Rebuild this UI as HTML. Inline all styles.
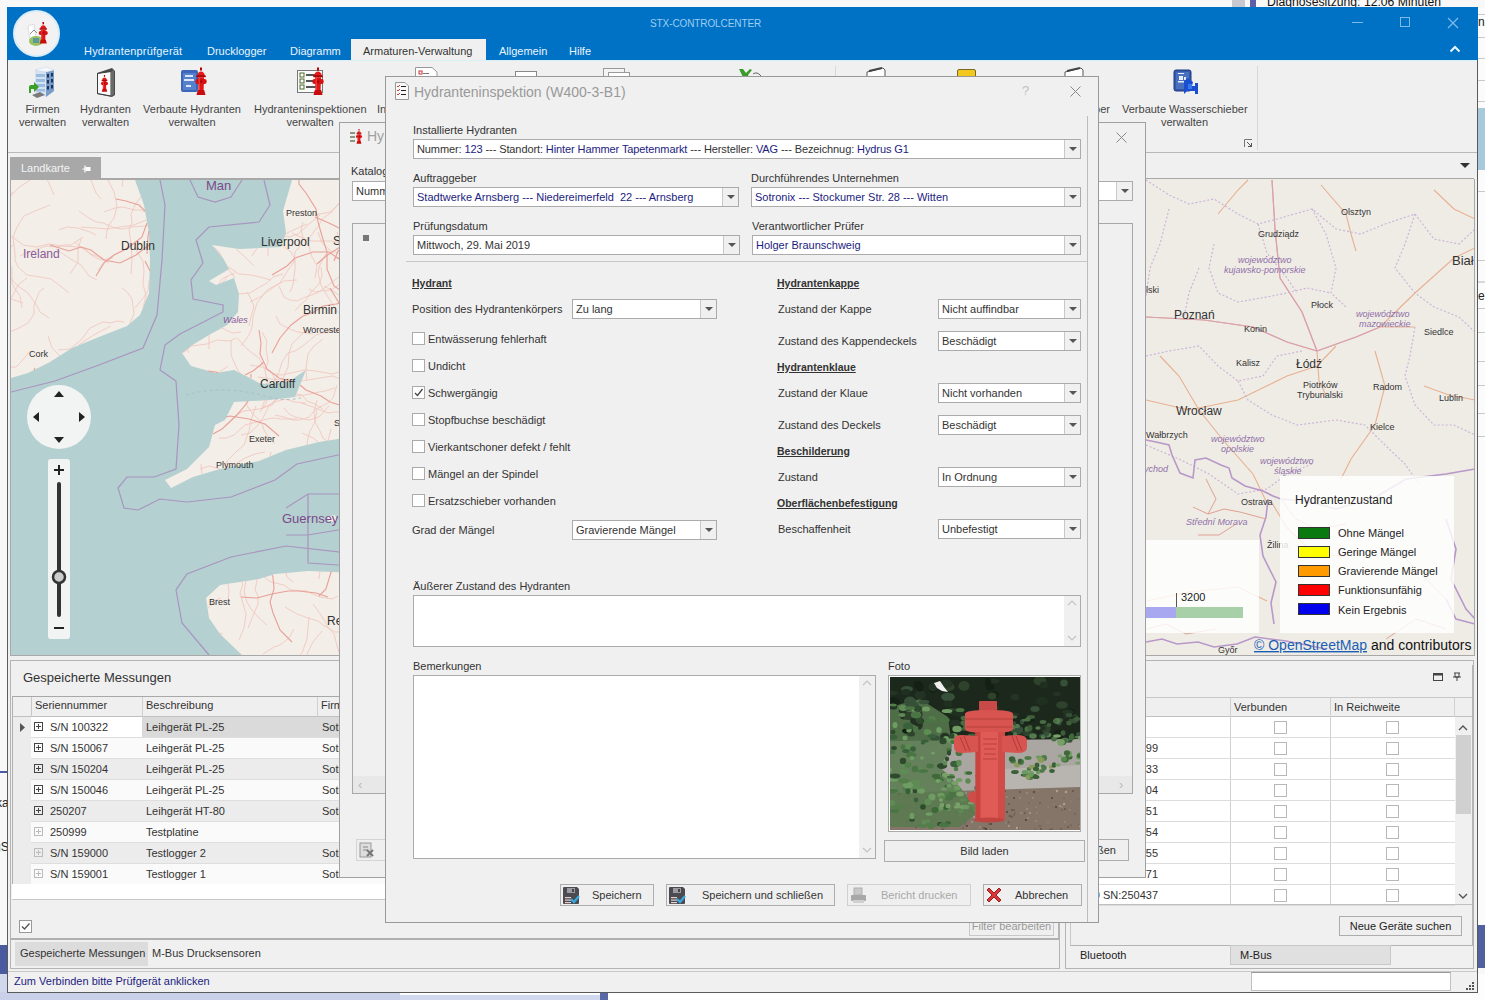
<!DOCTYPE html>
<html><head><meta charset="utf-8">
<style>
*{box-sizing:border-box;margin:0;padding:0}
html,body{width:1485px;height:1000px;overflow:hidden;background:#f7f7f7;font-family:"Liberation Sans",sans-serif;font-size:11px;color:#333}
.a{position:absolute}
.t{position:absolute;white-space:nowrap;line-height:13px}
.combo{position:absolute;background:#fff;border:1px solid #ababab;height:20px}
.combo .v{position:absolute;left:3px;top:3px;line-height:13px;white-space:nowrap;color:#1c1c80}
.combo .b{position:absolute;right:0;top:0;bottom:0;width:16px;border-left:1px solid #c8c8c8;background:#f0f0f0}
.combo .b:after{content:"";position:absolute;left:4px;top:7px;border-left:4px solid transparent;border-right:4px solid transparent;border-top:4px solid #555}
.cb{position:absolute;width:13px;height:13px;border:1px solid #aaa;background:#fff}
.u{font-weight:bold;text-decoration:underline;color:#333}
.btn{position:absolute;border:1px solid #adadad;background:#efefef;height:22px;text-align:center;line-height:20px}
</style></head><body>

<!-- desktop behind -->
<div class="a" style="left:0;top:0;width:1485px;height:8px;background:#f8f8f8"></div>
<div class="a" style="left:1232px;top:0;width:13px;height:8px;background:#c8c8d0"></div>
<div class="a" style="left:1250px;top:0;width:6px;height:8px;background:#5a5fa8"></div>
<div class="t" style="left:1267px;top:-4px;font-size:12.2px;color:#111">Diagnosesitzung: 12:06 Minuten</div>
<div class="a" style="left:0;top:771px;width:7px;height:2px;background:#4a5aa0"></div>
<div class="a" style="left:0;top:945px;width:7px;height:29px;background:#4a5aa0"></div>
<div class="a" style="left:0;top:974px;width:1485px;height:26px;background:#fdfdfd"></div>
<div class="a" style="left:0;top:974px;width:7px;height:26px;background:#d0d8ee"></div>
<div class="a" style="left:0;top:992px;width:400px;height:8px;background:#c8d0ea"></div>
<div class="a" style="left:400px;top:995px;width:200px;height:5px;background:#d0d8ee"></div>
<div class="a" style="left:600px;top:992px;width:8px;height:8px;background:#5a68a8"></div>


<!-- right strip behind -->
<div class="a" style="left:1477px;top:8px;width:8px;height:960px;background:#fbfbfb"></div>
<div class="t" style="left:1478px;top:16px;font-size:12px;color:#222">n</div>
<div class="a" style="left:1477px;top:14px;width:8px;height:1px;background:#c8c8c8"></div><div class="a" style="left:1477px;top:37px;width:8px;height:1px;background:#c8c8c8"></div><div class="a" style="left:1477px;top:58px;width:8px;height:1px;background:#c8c8c8"></div><div class="a" style="left:1477px;top:80px;width:8px;height:1px;background:#c8c8c8"></div><div class="a" style="left:1477px;top:101px;width:8px;height:1px;background:#c8c8c8"></div><div class="a" style="left:1477px;top:191px;width:8px;height:1px;background:#c8c8c8"></div><div class="a" style="left:1477px;top:260px;width:8px;height:1px;background:#c8c8c8"></div><div class="a" style="left:1477px;top:308px;width:8px;height:1px;background:#c8c8c8"></div><div class="a" style="left:1477px;top:332px;width:8px;height:1px;background:#c8c8c8"></div><div class="a" style="left:1477px;top:361px;width:8px;height:1px;background:#c8c8c8"></div><div class="a" style="left:1477px;top:385px;width:8px;height:1px;background:#c8c8c8"></div><div class="a" style="left:1477px;top:413px;width:8px;height:1px;background:#c8c8c8"></div><div class="a" style="left:1477px;top:436px;width:8px;height:1px;background:#c8c8c8"></div>
<div class="a" style="left:1477px;top:108px;width:8px;height:62px;background:#a8c8dc"></div>
<div class="a" style="left:1477px;top:281px;width:8px;height:2px;background:#d8d8d8"></div>
<div class="t" style="left:1478px;top:290px;font-size:12px;color:#222">e</div>
<div class="a" style="left:1477px;top:925px;width:8px;height:43px;background:#5060a0"></div>

<div class="t" style="left:-4px;top:797px;font-size:12px;color:#222">ka</div>
<div class="t" style="left:-6px;top:841px;font-size:12px;color:#222">gS</div>
<!-- main window -->
<div id="win" class="a" style="left:7px;top:7px;width:1471px;height:986px;background:#f0f0f0;border:1px solid #5a5a5a">
</div>

<!-- title bar -->
<div class="a" style="left:7px;top:7px;width:1471px;height:53px;background:#0072c6"></div>
<div class="a" style="left:13px;top:10px;width:47px;height:47px;border-radius:50%;background:#f2f2f2;border:2px solid #d8ecfa"></div>
<div class="t" style="left:650px;top:17px;font-size:10px;color:#9fcdf0;letter-spacing:-0.1px">STX-CONTROLCENTER</div>


<!-- tabs -->
<div class="t" style="left:84px;top:45px;color:#eaf4fc;letter-spacing:0.2px">Hydrantenprüfgerät</div>
<div class="t" style="left:207px;top:45px;color:#eaf4fc">Drucklogger</div>
<div class="t" style="left:290px;top:45px;color:#eaf4fc">Diagramm</div>
<div class="a" style="left:351px;top:39px;width:135px;height:22px;background:#f0f0f0"></div>
<div class="t" style="left:363px;top:45px;color:#333">Armaturen-Verwaltung</div>
<div class="t" style="left:499px;top:45px;color:#eaf4fc">Allgemein</div>
<div class="t" style="left:569px;top:45px;color:#eaf4fc">Hilfe</div>
<!-- window controls -->
<div class="a" style="left:1352px;top:22px;width:11px;height:1px;background:#7fbbe8"></div>
<div class="a" style="left:1400px;top:17px;width:10px;height:10px;border:1px solid #7fbbe8"></div>
<svg class="a" style="left:1447px;top:17px" width="12" height="12"><path d="M1 1L11 11M11 1L1 11" stroke="#7fbbe8" stroke-width="1.2"/></svg>
<svg class="a" style="left:1449px;top:45px" width="12" height="8"><path d="M1.5 6.5L6 2L10.5 6.5" stroke="#e8f6ff" stroke-width="2" fill="none"/></svg>

<!-- ribbon -->
<div class="a" style="left:8px;top:60px;width:1469px;height:1px;background:#d8f0f8"></div>
<div class="a" style="left:8px;top:152px;width:1469px;height:1px;background:#b8b8b8"></div>
<div class="a" style="left:835px;top:66px;width:1px;height:80px;background:#d8d8d8"></div>
<div class="a" style="left:1257px;top:66px;width:1px;height:84px;background:#d8d8d8"></div>
<div class="t" style="left:25px;top:103px;width:35px;text-align:center;color:#444">Firmen</div>
<div class="t" style="left:17px;top:116px;width:51px;text-align:center;color:#444">verwalten</div>
<div class="t" style="left:80px;top:103px;width:51px;text-align:center;color:#444">Hydranten</div>
<div class="t" style="left:80px;top:116px;width:51px;text-align:center;color:#444">verwalten</div>
<div class="t" style="left:142px;top:103px;width:100px;text-align:center;color:#444">Verbaute Hydranten</div>
<div class="t" style="left:142px;top:116px;width:100px;text-align:center;color:#444">verwalten</div>
<div class="t" style="left:254px;top:103px;width:112px;text-align:center;color:#444">Hydranteninspektionen</div>
<div class="t" style="left:254px;top:116px;width:112px;text-align:center;color:#444">verwalten</div>
<div class="t" style="left:377px;top:103px;color:#444">In</div>
<div class="t" style="left:1060px;top:103px;width:50px;text-align:right;color:#444">ber</div>
<div class="t" style="left:1122px;top:103px;width:125px;text-align:center;color:#444">Verbaute Wasserschieber</div>
<div class="t" style="left:1122px;top:116px;width:125px;text-align:center;color:#444">verwalten</div>
<svg class="a" style="left:1244px;top:139px" width="9" height="9"><path d="M0.5 8V0.5H8" stroke="#777" fill="none"/><path d="M3 3L7.5 7.5M4 7.5H7.5V4" stroke="#555" fill="none"/></svg>


<!-- ribbon icons -->
<svg width="0" height="0" style="position:absolute">
<defs>
<symbol id="hyd" viewBox="0 0 12 28">
<rect x="5" y="0" width="2" height="3" fill="#b00"/>
<path d="M2.2 8.5C2.2 2.5 9.8 2.5 9.8 8.5Z" fill="#e41a1a"/>
<rect x="1.2" y="7.8" width="9.6" height="2" rx="0.6" fill="#a80808"/>
<path d="M3 9.8H9L8.6 23H3.4Z" fill="#e01515"/>
<rect x="0.3" y="11.5" width="11.4" height="5" rx="2.2" fill="#d41010"/>
<path d="M1.5 27.5L2.8 22.5H9.2L10.5 27.5Z" fill="#c80c0c"/>
<path d="M4.2 10V22.5" stroke="#ff6a6a" stroke-width="1" opacity=".7"/>
<circle cx="6" cy="14" r="1" fill="#900"/>
</symbol>
</defs>
</svg>
<svg class="a" style="left:28px;top:66px" width="27" height="32" viewBox="0 0 27 32">
<path d="M7 4L18 1L26 4V25L18 31L7 27Z" fill="#d4e2f2"/>
<path d="M18 6L26 4V25L18 31Z" fill="#7a9cc8"/>
<path d="M7 4L18 1L26 4L18 6Z" fill="#f4f8fc" stroke="#c8d4e0" stroke-width=".5"/>
<g fill="#9cbce0"><rect x="8" y="8" width="9" height="3"/><rect x="8" y="13" width="9" height="3"/><rect x="8" y="18" width="9" height="3"/><rect x="8" y="23" width="9" height="2.5"/></g>
<g fill="#1e3458"><rect x="19" y="8" width="2" height="3.5"/><rect x="23" y="7" width="2" height="3.5"/><rect x="19" y="14" width="2" height="3.5"/><rect x="23" y="13" width="2" height="3.5"/><rect x="19" y="20" width="2" height="3.5"/><rect x="23" y="19" width="2" height="3.5"/></g>
<path d="M4 29L12 26L17 29L9 32Z" fill="#7a7a7a"/>
<path d="M1 21Q1 19 3 19H6V16L11 21L6 26V23H3V27H1Z" fill="#3aa028"/>
</svg>
<svg class="a" style="left:96px;top:67px" width="20" height="31" viewBox="0 0 20 31">
<path d="M1 6L16 1L19 4V28L16 30L1 27Z" fill="#4a4a4a"/>
<path d="M1.5 6.5L15 4.5V29L1.5 26.5Z" fill="#fbfbfb" stroke="#3a3a3a" stroke-width="1"/>
<path d="M15 4.5L18 2.5V27.5L15 29" fill="#6a6a6a"/>
<use href="#hyd" x="4.5" y="8" width="8" height="17"/>
</svg>
<svg class="a" style="left:180px;top:66px" width="29" height="31" viewBox="0 0 29 31">
<rect x="1" y="4" width="17" height="22" rx="2" fill="#3e66b8"/>
<rect x="3" y="7" width="13" height="17" fill="#5580cc"/>
<g fill="#dce6f8"><rect x="5" y="9" width="8" height="2"/><rect x="4" y="13" width="10" height="2"/><rect x="6" y="19" width="5" height="2"/></g>
<use href="#hyd" x="15" y="1" width="12" height="29"/>
</svg>
<svg class="a" style="left:296px;top:66px" width="30" height="31" viewBox="0 0 30 31">
<rect x="1.5" y="4.5" width="25" height="22" fill="#fafafa" stroke="#777"/>
<g fill="#fff" stroke="#4a6a2a"><rect x="4" y="7" width="4" height="4"/><rect x="4" y="13" width="4" height="4"/><rect x="4" y="19" width="4" height="4"/></g>
<g fill="#555"><rect x="10" y="8" width="10" height="2"/><rect x="10" y="14" width="10" height="2"/><rect x="10" y="20" width="10" height="2"/></g>
<use href="#hyd" x="16" y="1" width="12" height="29"/>
</svg>
<svg class="a" style="left:1173px;top:69px" width="26" height="27" viewBox="0 0 26 27">
<rect x="1" y="1" width="17" height="21" rx="2" fill="#3558a8" stroke="#1e3a80"/>
<rect x="3" y="3" width="13" height="17" fill="#4a70c0"/>
<g fill="#e8eefa"><rect x="5" y="4" width="6" height="1"/><rect x="6" y="7" width="4" height="4"/><rect x="11" y="8" width="2" height="3"/><rect x="5" y="12" width="8" height="1.5"/></g>
<path d="M11 12L15 9L20 13L19 17H22V14H25V25H22V22H14L11 25Z" fill="#1a50d0"/>
<rect x="15" y="15" width="4" height="5" fill="#3a78f0"/>
</svg>
<!-- partially hidden icons peeking above dialog -->
<svg class="a" style="left:415px;top:66px" width="24" height="10"><path d="M0.5 10V1.5H17L22 6V10" fill="#fff" stroke="#999"/><rect x="4" y="5" width="3" height="3" fill="none" stroke="#c33"/><rect x="8" y="7" width="6" height="1" fill="#777"/></svg>
<div class="a" style="left:515px;top:71px;width:22px;height:5px;background:#fff;border:1px solid #888;border-bottom:none"></div>
<div class="a" style="left:603px;top:68px;width:22px;height:8px;background:#f4f4f4;border:1px solid #999;border-bottom:none"></div>
<div class="a" style="left:608px;top:72px;width:22px;height:4px;background:#fff;border:1px solid #999;border-bottom:none"></div>
<svg class="a" style="left:739px;top:69px" width="24" height="8"><path d="M0 0L4 0L7 4L11 0L13 1L9 6L10 8H4Z" fill="#3a9a2a"/><path d="M14 5Q18 2 22 7" stroke="#666" fill="none"/></svg>
<svg class="a" style="left:866px;top:67px" width="20" height="9"><path d="M1 9V5L17 1L19 3V9" fill="#fff" stroke="#555"/><path d="M3 4L16 1" stroke="#444" stroke-width="2"/></svg>
<div class="a" style="left:957px;top:69px;width:19px;height:8px;background:#f0c820;border:1px solid #7a6a20;border-radius:2px 2px 0 0"></div>
<svg class="a" style="left:1064px;top:67px" width="20" height="9"><path d="M1 9V5L17 1L19 3V9" fill="#fff" stroke="#555"/><path d="M3 4L16 1" stroke="#444" stroke-width="2"/></svg>

<!-- app logo in circle -->
<svg class="a" style="left:22px;top:18px" width="32" height="32" viewBox="0 0 32 32">
<path d="M6 8L12 6L14 20L8 22Z" fill="#fff" stroke="#ccc" stroke-width=".6"/>
<path d="M8 16L12 12L15 15" stroke="#777" fill="none" stroke-width="0.8"/>
<ellipse cx="14" cy="23" rx="7" ry="5" fill="#9ac060"/>
<rect x="11" y="20" width="6" height="5" fill="#5a9a9a"/>
<use href="#hyd" x="16.5" y="4" width="9.5" height="22"/>
</svg>


<!-- Landkarte tab -->
<div class="a" style="left:10px;top:157px;width:91px;height:22px;background:#a8a8a8"></div>
<div class="t" style="left:21px;top:162px;color:#f4f4f4">Landkarte</div>
<svg class="a" style="left:82px;top:165px" width="10" height="8"><path d="M0.5 4H3M3 0.5V7.5" stroke="#fff" stroke-width="1.2" fill="none"/><rect x="3.5" y="2" width="5" height="4" fill="#fff"/></svg>
<svg class="a" style="left:1460px;top:163px" width="10" height="6"><path d="M0 0H10L5 5Z" fill="#333"/></svg>
<div class="a" style="left:10px;top:178px;width:1464px;height:2px;background:#a8a8a8"></div>

<!-- left map -->
<svg class="a" style="left:11px;top:180px" width="336" height="476" viewBox="0 0 336 476">
<rect width="336" height="476" fill="#b5d0d0"/>
<g fill="#f3eee7">
<polygon points="-11,0 124,0 133,25 138,53 139,80 138,113 129,135 116,146 88,157 61,168 39,182 17,193 0,198 -11,200"/>
<polygon points="281,0 374,0 374,259 327,259 308,262 275,270 248,281 209,289 182,297 160,308 154,300 176,289 198,267 204,245 214,240 223,222 259,220 284,217 295,190 277,202 250,204 237,197 223,190 205,193 180,186 171,173 183,164 198,155 216,145 227,132 228,114 223,98 205,105 198,101 218,89 212,78 201,65 228,69 270,67 275,53 272,31"/>
<polygon points="374,394 297,391 264,394 248,399 209,405 195,418 198,438 209,454 231,475 374,475"/>
<polygon points="316,337 324,335 326,341 318,342"/>
</g>
<g fill="none" stroke="#f0c4bc" stroke-width="0.8"><path d="M33 108 L28 112 L23 126 L23 134 L17 143 L8 148 L1 151 L0 151"/><path d="M120 94 L121 78 L120 64 L118 49 L121 43 L120 34 L124 25 L129 18 L130 17"/><path d="M93 32 L104 28 L112 27 L123 30 L130 30 L134 32"/><path d="M43 15 L37 1 L36 0"/><path d="M19 171 L10 182 L5 187 L0 187"/><path d="M85 55 L79 52 L67 48 L56 47 L48 50"/><path d="M37 156 L41 168 L49 176 L49 176"/><path d="M90 19 L85 13 L80 0"/><path d="M20 0 L19 0 L7 8 L0 16"/><path d="M12 123 L0 119"/><path d="M72 57 L60 65 L53 65 L47 67 L35 66 L21 71 L15 73 L9 76"/><path d="M70 47 L85 48 L95 49 L109 47 L123 45 L130 42 L136 40"/><path d="M59 94 L67 82 L67 76 L67 69 L70 59"/><path d="M68 31 L78 38 L85 42 L92 43 L104 48 L111 49 L121 47 L134 46 L137 45"/><path d="M98 83 L91 78 L80 74 L74 69 L68 67 L52 66 L38 64 L25 67 L12 65 L3 58 L0 56"/><path d="M113 142 L106 141 L100 143 L92 142 L79 148 L70 160 L59 169 L47 170"/><path d="M111 7 L112 0"/><path d="M58 113 L52 108 L40 99 L29 97 L16 95 L7 87 L4 80 L4 73 L2 57 L6 47 L13 36 L24 31 L39 25"/><path d="M124 61 L126 72 L132 81 L133 91 L132 104 L135 116 L132 128 L132 128"/><path d="M124 128 L133 117 L137 110 L138 102 L138 100"/><path d="M120 62 L115 69 L109 72 L98 78 L93 82 L87 90"/><path d="M11 128 L9 116 L4 109 L1 103 L1 88 L0 86"/><path d="M0 14 L2 12"/><path d="M16 98 L7 105 L1 117 L0 118"/><path d="M64 62 L70 67 L79 74 L85 78 L91 80 L102 78"/><path d="M38 138 L29 132 L26 126 L17 113 L7 106 L0 99"/><path d="M0 67 L3 64"/><path d="M111 108 L117 113 L121 119 L123 134 L119 143 L119 144"/><path d="M95 59 L96 51 L98 45 L103 38 L106 26 L103 12 L97 0"/><path d="M86 100 L78 96 L70 85 L58 78 L45 69"/><path d="M100 146 L86 153 L75 160 L69 164 L68 165"/><path d="M272 94 L262 97 L256 103 L247 108 L239 113 L228 114"/><path d="M265 136 L269 144 L281 150 L287 152 L302 154"/><path d="M315 74 L309 85 L307 92 L310 105 L317 117 L325 130 L332 136 L336 138"/><path d="M268 106 L273 117 L279 120 L286 121 L292 118 L306 113 L319 104 L330 95 L336 93"/><path d="M309 35 L298 44 L287 54 L278 57 L274 56"/><path d="M291 253 L302 258 L307 262 L307 262"/><path d="M216 96 L210 100 L208 104"/><path d="M198 155 L198 156 L198 169"/><path d="M304 35 L319 32 L327 25 L334 12 L336 10"/><path d="M217 186 L207 193"/><path d="M279 112 L282 105 L284 89 L284 79 L280 72 L271 65"/><path d="M334 189 L336 189"/><path d="M296 44 L289 47 L276 53 L274 55"/><path d="M298 109 L304 112 L310 111 L320 110 L329 104 L333 95 L335 82 L335 73 L330 64 L326 52"/><path d="M320 249 L317 261"/><path d="M249 232 L255 223 L256 220"/><path d="M262 203 L263 201 L268 192 L271 182 L277 173 L284 171 L293 165 L305 155 L319 151 L326 150 L336 149"/><path d="M243 86 L234 77 L226 70 L225 69"/><path d="M250 229 L264 222 L274 219 L284 222 L295 223"/><path d="M239 122 L251 116 L256 110 L269 103 L277 90 L283 82 L284 72 L290 65 L292 58 L290 49 L292 42"/><path d="M189 289 L198 286 L209 289 L209 289"/><path d="M307 52 L311 63 L320 71 L331 74 L336 74"/><path d="M260 100 L249 97 L240 95 L228 94 L216 86"/><path d="M210 76 L209 73 L203 67"/><path d="M245 226 L240 240 L238 251 L233 265 L225 272 L216 281 L214 288"/><path d="M254 272 L244 274 L234 278 L226 283 L214 288"/><path d="M251 227 L254 220"/><path d="M256 204 L256 201 L254 190 L257 182 L255 167 L256 161 L251 152"/><path d="M225 158 L219 161 L206 160 L196 164 L180 166 L176 170 L171 173"/><path d="M260 272 L259 277"/><path d="M220 160 L220 166 L220 175 L226 189 L230 194"/><path d="M235 221 L235 224 L241 233 L251 243 L253 250 L258 258 L264 264"/><path d="M257 76 L257 68"/><path d="M230 152 L221 153 L211 148 L210 148"/><path d="M306 230 L304 242 L299 251 L297 258 L296 265"/><path d="M306 220 L303 232 L304 242 L309 251 L312 258 L316 261"/><path d="M312 159 L302 167 L297 174 L296 181 L295 188 L296 201"/><path d="M326 205 L322 218 L317 223 L305 229 L298 237 L289 240 L282 240 L273 237 L264 235"/><path d="M312 229 L304 224 L296 221 L291 215 L285 214"/><path d="M265 219 L258 226 L252 238 L247 245 L239 253 L230 255"/><path d="M328 23 L321 32 L311 39 L308 45 L299 57 L297 63 L301 77 L306 86 L304 98"/><path d="M281 53 L294 59 L300 61 L306 61 L321 61 L333 64 L336 65"/><path d="M247 197 L260 199 L270 200 L277 199 L280 200"/><path d="M290 201 L303 199 L315 197 L322 196 L329 199 L336 200"/><path d="M241 76 L244 71 L247 68"/><path d="M290 223 L302 227 L317 233 L323 232 L336 232"/><path d="M239 185 L251 187 L263 194 L270 195 L280 193 L293 190 L295 190"/><path d="M295 190 L305 191 L321 194 L331 191"/><path d="M224 98 L218 90 L217 89"/><path d="M226 158 L236 169 L248 178 L253 187 L260 192 L265 201"/><path d="M323 78 L333 77 L336 79"/><path d="M208 258 L215 258 L223 255 L234 245 L249 241 L256 239 L262 238 L271 239 L286 239"/><path d="M190 284 L191 294"/><path d="M313 106 L325 113 L330 117 L335 127 L336 128"/><path d="M238 146 L240 137 L243 126 L240 119 L236 112"/><path d="M251 203 L251 204"/><path d="M284 216 L287 216 L299 214 L308 212 L314 211 L324 208"/><path d="M273 228 L278 234 L284 237 L298 240 L308 237 L318 226"/><path d="M286 100 L273 101 L266 105 L253 114 L246 123 L242 137 L241 148 L238 155 L230 166"/><path d="M310 87 L311 96 L308 104 L300 112 L295 120 L289 125 L284 131"/><path d="M224 93 L217 96 L211 103"/><path d="M178 173 L176 169"/><path d="M213 93 L213 92"/><path d="M304 147 L292 153 L281 164 L278 173 L277 187 L272 198 L272 202"/><path d="M266 219 L261 225 L248 229 L233 231 L225 235 L220 241"/><path d="M308 399 L309 391"/><path d="M217 422 L218 411 L217 404"/><path d="M302 424 L310 435 L317 447 L323 454 L326 466 L329 475"/><path d="M256 445 L249 439 L240 429 L236 422 L233 412 L235 401"/><path d="M212 454 L208 453"/><path d="M282 402 L276 397 L275 393"/><path d="M274 427 L286 434 L300 439 L307 441 L312 445 L324 452 L335 452 L336 452"/><path d="M252 474 L263 467 L269 465 L278 458 L283 449"/><path d="M210 418 L203 421 L199 426 L197 428"/><path d="M237 448 L242 436 L247 424 L247 416 L244 410 L246 401 L246 399"/><path d="M327 416 L321 419 L309 417 L295 411 L280 410 L273 405 L260 402 L253 397"/><path d="M228 460 L233 448 L235 434 L231 420 L229 413 L232 404 L231 402"/><path d="M311 451 L302 462 L296 474 L296 475"/><path d="M298 437 L297 448 L296 459 L291 473 L289 475"/></g>
<g fill="none" stroke="#e8a098" stroke-width="1.1"><path d="M136 74 L137 56 L138 51"/><path d="M85 96 L93 83 L103 75 L117 68 L131 57 L136 43"/><path d="M134 81 L139 91"/><path d="M39 65 L58 71 L70 67 L80 70 L93 80 L109 83 L125 75 L138 65"/><path d="M105 19 L115 21 L128 25 L134 31"/><path d="M24 188 L23 190"/><path d="M268 256 L254 244 L238 239 L219 236 L215 237"/><path d="M335 114 L323 106 L316 89 L316 72 L311 56 L307 42 L305 29 L295 13 L288 4 L288 0"/><path d="M306 84 L315 76 L329 67 L336 67"/><path d="M248 150 L250 163 L249 174 L256 189 L268 198 L279 201"/><path d="M289 205 L295 210 L310 216 L319 222 L332 226 L336 228"/><path d="M319 108 L328 123 L333 133 L336 135"/><path d="M261 173 L269 158 L280 145 L292 136 L303 132 L312 126 L325 124 L336 122"/><path d="M334 106 L336 102"/><path d="M261 95 L276 86 L284 78 L302 72 L318 72 L331 81 L336 87"/><path d="M253 182 L242 191 L234 195"/><path d="M207 193 L205 192 L197 191"/><path d="M304 37 L318 43 L334 51 L336 52"/><path d="M323 81 L327 71 L336 62"/><path d="M240 194 L240 198"/><path d="M237 221 L236 223 L225 236 L211 249 L202 254"/><path d="M317 417 L305 413 L288 411 L277 411 L261 414 L246 418 L230 417"/><path d="M308 416 L315 409 L320 392 L321 392"/><path d="M281 462 L269 450 L262 433 L259 422 L263 409 L262 397 L261 395"/></g>
<g fill="none" stroke="#a894c0" stroke-width="1.2">
<path d="M149 0 L154 25 L151 80 L146 135 L132 168 L88 185 L44 201 L0 212 L-11 215"/>
<path d="M179 0 L187 17 L204 22 L220 17 L231 0"/>
<path d="M253 0 L259 25 L248 42 L198 47 L185 60 L192 83 L180 100 L182 119 L212 125 L212 132 L169 154 L154 165 L149 190 L165 201 L168 245 L165 289 L143 297 L116 297 L107 308 L113 328 L127 330 L149 319 L176 322 L220 317 L264 300 L286 284 L327 275 L374 273"/>
<path d="M275 328 L297 314 L327 314 L374 314"/>
<path d="M275 355 L297 355 L327 350 L374 350"/>
<path d="M297 314 L297 383 L327 385 L374 385"/>
<path d="M374 377 L275 366 L220 377 L176 394 L165 410 L171 443 L198 475"/>
</g>
<path d="M175 215Q210 205 250 215Q270 222 290 218" stroke="#a8c0c8" stroke-dasharray="3,3" fill="none"/>
<g font-family="Liberation Sans" fill="#333">
<text x="195" y="10" font-size="13" fill="#7a4a8a">Man</text>
<text x="110" y="70" font-size="12">Dublin</text>
<text x="12" y="78" font-size="12" fill="#8a5a9a">Ireland</text>
<text x="18" y="177" font-size="9">Cork</text>
<text x="275" y="36" font-size="9">Preston</text>
<text x="250" y="66" font-size="12">Liverpool</text>
<text x="292" y="134" font-size="12">Birmin</text>
<text x="292" y="153" font-size="9">Worceste</text>
<text x="212" y="143" font-size="9" fill="#8a5a9a" font-style="italic">Wales</text>
<text x="249" y="208" font-size="12">Cardiff</text>
<text x="238" y="262" font-size="9">Exeter</text>
<text x="205" y="288" font-size="9">Plymouth</text>
<text x="271" y="343" font-size="13" fill="#7a4a8a">Guernsey</text>
<text x="198" y="425" font-size="9">Brest</text>
<text x="316" y="445" font-size="12">Re</text>
<text x="322" y="65" font-size="12">S</text>
<text x="323" y="246" font-size="9">S</text>
</g>
</svg>
<!-- map controls -->
<div class="a" style="left:27px;top:385px;width:64px;height:64px;border-radius:50%;background:#f2f4f4"></div>
<svg class="a" style="left:27px;top:385px" width="64" height="64"><g fill="#222"><path d="M32 6L37 12H27Z"/><path d="M32 58L37 52H27Z"/><path d="M6 32L12 27V37Z"/><path d="M58 32L52 27V37Z"/></g></svg>
<div class="a" style="left:48px;top:459px;width:22px;height:180px;border-radius:3px;background:#f2f4f4"></div>
<svg class="a" style="left:48px;top:459px" width="22" height="180"><g stroke="#222" stroke-width="2" fill="none"><path d="M6 11H16M11 6V16"/><path d="M6 169H16"/></g><line x1="11" y1="25" x2="11" y2="156" stroke="#333" stroke-width="4" stroke-linecap="round"/><circle cx="11" cy="118" r="6" fill="#ccc" stroke="#333" stroke-width="2.5"/></svg>




<!-- left bottom panel -->
<div class="a" style="left:10px;top:660px;width:1050px;height:309px;border:1px solid #b4b4b4;background:#f0f0f0"></div>
<div class="a" style="left:11px;top:661px;width:1048px;height:279px;border-bottom:2px solid #b0b0b0;border-right:1px solid #b4b4b4"></div>
<div class="t" style="left:23px;top:670px;font-size:13px;line-height:15px;color:#333">Gespeicherte Messungen</div>
<div class="a" style="left:12px;top:696px;width:1040px;height:188px;background:#fff;border-top:1px solid #a8a8a8;border-left:1px solid #b0b0b0"></div>
<div class="a" style="left:13px;top:697px;width:1040px;height:20px;background:#efefef;border-bottom:1px solid #c0c0c0"></div>
<div class="a" style="left:13px;top:717px;width:18px;height:168px;background:#ececec"></div>
<div class="a" style="left:31px;top:697px;width:1px;height:188px;background:#c8c8c8"></div>
<div class="a" style="left:142px;top:697px;width:1px;height:188px;background:#d0d0d0"></div>
<div class="a" style="left:317px;top:697px;width:1px;height:188px;background:#d0d0d0"></div>
<div class="t" style="left:35px;top:699px;color:#333">Seriennummer</div>
<div class="t" style="left:146px;top:699px;color:#333">Beschreibung</div>
<div class="t" style="left:321px;top:699px;color:#333">Firma</div>
<div class="a" style="left:31px;top:717px;width:111px;height:21px;background:#fff"></div><div class="a" style="left:142px;top:717px;width:250px;height:21px;background:#dadada"></div><svg class="a" style="left:20px;top:723px" width="6" height="9"><path d="M0 0L5 4.5L0 9Z" fill="#555"/></svg><div class="a" style="left:31px;top:737px;width:361px;height:1px;background:#dedede"></div><svg class="a" style="left:34px;top:722px" width="9" height="9"><rect x="0.5" y="0.5" width="8" height="8" fill="none" stroke="#444"/><path d="M2 4.5H7M4.5 2V7" stroke="#444"/></svg><div class="t" style="left:50px;top:721px;color:#333">S/N 100322</div><div class="t" style="left:146px;top:721px;color:#333">Leihgerät PL-25</div><div class="t" style="left:322px;top:721px;color:#333">Sotr</div>
<div class="a" style="left:31px;top:738px;width:361px;height:21px;background:#fafafa"></div><div class="a" style="left:31px;top:758px;width:361px;height:1px;background:#dedede"></div><svg class="a" style="left:34px;top:743px" width="9" height="9"><rect x="0.5" y="0.5" width="8" height="8" fill="none" stroke="#444"/><path d="M2 4.5H7M4.5 2V7" stroke="#444"/></svg><div class="t" style="left:50px;top:742px;color:#333">S/N 150067</div><div class="t" style="left:146px;top:742px;color:#333">Leihgerät PL-25</div><div class="t" style="left:322px;top:742px;color:#333">Sotr</div>
<div class="a" style="left:31px;top:759px;width:361px;height:21px;background:#ececec"></div><div class="a" style="left:31px;top:779px;width:361px;height:1px;background:#dedede"></div><svg class="a" style="left:34px;top:764px" width="9" height="9"><rect x="0.5" y="0.5" width="8" height="8" fill="none" stroke="#444"/><path d="M2 4.5H7M4.5 2V7" stroke="#444"/></svg><div class="t" style="left:50px;top:763px;color:#333">S/N 150204</div><div class="t" style="left:146px;top:763px;color:#333">Leihgerät PL-25</div><div class="t" style="left:322px;top:763px;color:#333">Sotr</div>
<div class="a" style="left:31px;top:780px;width:361px;height:21px;background:#fafafa"></div><div class="a" style="left:31px;top:800px;width:361px;height:1px;background:#dedede"></div><svg class="a" style="left:34px;top:785px" width="9" height="9"><rect x="0.5" y="0.5" width="8" height="8" fill="none" stroke="#444"/><path d="M2 4.5H7M4.5 2V7" stroke="#444"/></svg><div class="t" style="left:50px;top:784px;color:#333">S/N 150046</div><div class="t" style="left:146px;top:784px;color:#333">Leihgerät PL-25</div><div class="t" style="left:322px;top:784px;color:#333">Sotr</div>
<div class="a" style="left:31px;top:801px;width:361px;height:21px;background:#ececec"></div><div class="a" style="left:31px;top:821px;width:361px;height:1px;background:#dedede"></div><svg class="a" style="left:34px;top:806px" width="9" height="9"><rect x="0.5" y="0.5" width="8" height="8" fill="none" stroke="#444"/><path d="M2 4.5H7M4.5 2V7" stroke="#444"/></svg><div class="t" style="left:50px;top:805px;color:#333">250207</div><div class="t" style="left:146px;top:805px;color:#333">Leihgerät HT-80</div><div class="t" style="left:322px;top:805px;color:#333">Sotr</div>
<div class="a" style="left:31px;top:822px;width:361px;height:21px;background:#fafafa"></div><div class="a" style="left:31px;top:842px;width:361px;height:1px;background:#dedede"></div><svg class="a" style="left:34px;top:827px" width="9" height="9"><rect x="0.5" y="0.5" width="8" height="8" fill="none" stroke="#bbb"/><path d="M2 4.5H7M4.5 2V7" stroke="#bbb"/></svg><div class="t" style="left:50px;top:826px;color:#333">250999</div><div class="t" style="left:146px;top:826px;color:#333">Testplatine</div><div class="t" style="left:322px;top:826px;color:#333"></div>
<div class="a" style="left:31px;top:843px;width:361px;height:21px;background:#ececec"></div><div class="a" style="left:31px;top:863px;width:361px;height:1px;background:#dedede"></div><svg class="a" style="left:34px;top:848px" width="9" height="9"><rect x="0.5" y="0.5" width="8" height="8" fill="none" stroke="#bbb"/><path d="M2 4.5H7M4.5 2V7" stroke="#bbb"/></svg><div class="t" style="left:50px;top:847px;color:#333">S/N 159000</div><div class="t" style="left:146px;top:847px;color:#333">Testlogger 2</div><div class="t" style="left:322px;top:847px;color:#333">Sotr</div>
<div class="a" style="left:31px;top:864px;width:361px;height:21px;background:#fafafa"></div><div class="a" style="left:31px;top:884px;width:361px;height:1px;background:#dedede"></div><svg class="a" style="left:34px;top:869px" width="9" height="9"><rect x="0.5" y="0.5" width="8" height="8" fill="none" stroke="#bbb"/><path d="M2 4.5H7M4.5 2V7" stroke="#bbb"/></svg><div class="t" style="left:50px;top:868px;color:#333">S/N 159001</div><div class="t" style="left:146px;top:868px;color:#333">Testlogger 1</div><div class="t" style="left:322px;top:868px;color:#333">Sotr</div>

<div class="a" style="left:12px;top:884px;width:1040px;height:16px;background:#fff;border-bottom:1px solid #c8c8c8"></div>
<div class="a" style="left:19px;top:920px;width:13px;height:13px;border:1px solid #999;background:#fff"></div>
<svg class="a" style="left:20px;top:921px" width="11" height="11"><path d="M2 5.5L4.5 8L9.5 2.5" stroke="#555" stroke-width="1.3" fill="none"/></svg>
<div class="btn" style="left:969px;top:917px;width:85px;height:19px;line-height:17px;color:#999;border-color:#c8c8c8">Filter bearbeiten</div>
<div class="a" style="left:15px;top:942px;width:133px;height:24px;background:#dcdcdc"></div>
<div class="t" style="left:20px;top:947px;color:#333">Gespeicherte Messungen</div>
<div class="t" style="left:152px;top:947px;color:#333">M-Bus Drucksensoren</div>

<!-- status bar -->
<div class="a" style="left:8px;top:971px;width:1469px;height:1px;background:#c8c8c8"></div>
<div class="t" style="left:14px;top:975px;color:#1c1c80">Zum Verbinden bitte Prüfgerät anklicken</div>
<div class="a" style="left:1251px;top:972px;width:200px;height:19px;background:#fff;border:1px solid #c0c0c0;border-top-color:#999"></div>
<svg class="a" style="left:1466px;top:982px" width="9" height="9"><g fill="#555"><rect x="6" y="0" width="2" height="2"/><rect x="3" y="3" width="2" height="2"/><rect x="6" y="3" width="2" height="2"/><rect x="0" y="6" width="2" height="2"/><rect x="3" y="6" width="2" height="2"/><rect x="6" y="6" width="2" height="2"/></g></svg>

<!-- right bottom panel -->
<div class="a" style="left:1065px;top:660px;width:409px;height:309px;border:1px solid #b4b4b4;background:#f0f0f0"></div>
<div class="a" style="left:1070px;top:665px;width:403px;height:281px;border:1px solid #b4b4b4;border-top:none;border-left:1px solid #c8c8c8"></div>
<svg class="a" style="left:1433px;top:672px" width="30" height="10"><rect x="0.5" y="1.5" width="9" height="7" fill="none" stroke="#444"/><rect x="0.5" y="1.5" width="9" height="2" fill="#444"/><path d="M21 1H27M22 1V5H26V1M20 5H28M24 5V9" stroke="#444" fill="none"/></svg>
<div class="a" style="left:1070px;top:697px;width:402px;height:208px;background:#fff;border-top:1px solid #c8c8c8;border-bottom:1px solid #c0c0c0"></div>
<div class="a" style="left:1070px;top:698px;width:402px;height:19px;background:#efefef;border-bottom:1px solid #c0c0c0"></div>
<div class="a" style="left:1230px;top:698px;width:1px;height:206px;background:#d0d0d0"></div>
<div class="a" style="left:1330px;top:698px;width:1px;height:206px;background:#d0d0d0"></div>
<div class="a" style="left:1454px;top:698px;width:1px;height:19px;background:#d0d0d0"></div>
<div class="t" style="left:1234px;top:701px;color:#333">Verbunden</div>
<div class="t" style="left:1334px;top:701px;color:#333">In Reichweite</div>
<div class="a" style="left:1070px;top:737px;width:385px;height:1px;background:#dcdcdc"></div><div class="cb" style="left:1274px;top:721px;border-color:#b8b8b8"></div><div class="cb" style="left:1386px;top:721px;border-color:#b8b8b8"></div>
<div class="a" style="left:1070px;top:758px;width:385px;height:1px;background:#dcdcdc"></div><div class="t" style="left:1060px;top:742px;width:98px;text-align:right;color:#333">SN:250999</div><div class="cb" style="left:1274px;top:742px;border-color:#b8b8b8"></div><div class="cb" style="left:1386px;top:742px;border-color:#b8b8b8"></div>
<div class="a" style="left:1070px;top:779px;width:385px;height:1px;background:#dcdcdc"></div><div class="t" style="left:1060px;top:763px;width:98px;text-align:right;color:#333">SN:250133</div><div class="cb" style="left:1274px;top:763px;border-color:#b8b8b8"></div><div class="cb" style="left:1386px;top:763px;border-color:#b8b8b8"></div>
<div class="a" style="left:1070px;top:800px;width:385px;height:1px;background:#dcdcdc"></div><div class="t" style="left:1060px;top:784px;width:98px;text-align:right;color:#333">SN:250204</div><div class="cb" style="left:1274px;top:784px;border-color:#b8b8b8"></div><div class="cb" style="left:1386px;top:784px;border-color:#b8b8b8"></div>
<div class="a" style="left:1070px;top:821px;width:385px;height:1px;background:#dcdcdc"></div><div class="t" style="left:1060px;top:805px;width:98px;text-align:right;color:#333">SN:250451</div><div class="cb" style="left:1274px;top:805px;border-color:#b8b8b8"></div><div class="cb" style="left:1386px;top:805px;border-color:#b8b8b8"></div>
<div class="a" style="left:1070px;top:842px;width:385px;height:1px;background:#dcdcdc"></div><div class="t" style="left:1060px;top:826px;width:98px;text-align:right;color:#333">SN:250454</div><div class="cb" style="left:1274px;top:826px;border-color:#b8b8b8"></div><div class="cb" style="left:1386px;top:826px;border-color:#b8b8b8"></div>
<div class="a" style="left:1070px;top:863px;width:385px;height:1px;background:#dcdcdc"></div><div class="t" style="left:1060px;top:847px;width:98px;text-align:right;color:#333">SN:250455</div><div class="cb" style="left:1274px;top:847px;border-color:#b8b8b8"></div><div class="cb" style="left:1386px;top:847px;border-color:#b8b8b8"></div>
<div class="a" style="left:1070px;top:884px;width:385px;height:1px;background:#dcdcdc"></div><div class="t" style="left:1060px;top:868px;width:98px;text-align:right;color:#333">SN:250271</div><div class="cb" style="left:1274px;top:868px;border-color:#b8b8b8"></div><div class="cb" style="left:1386px;top:868px;border-color:#b8b8b8"></div>
<div class="a" style="left:1070px;top:905px;width:385px;height:1px;background:#dcdcdc"></div><div class="t" style="left:1060px;top:889px;width:98px;text-align:right;color:#333">0 SN:250437</div><div class="cb" style="left:1274px;top:889px;border-color:#b8b8b8"></div><div class="cb" style="left:1386px;top:889px;border-color:#b8b8b8"></div>

<div class="a" style="left:1455px;top:717px;width:17px;height:187px;background:#f0f0f0"></div>
<div class="a" style="left:1456px;top:735px;width:15px;height:79px;background:#d0d0d0"></div>
<svg class="a" style="left:1457px;top:722px" width="12" height="180"><path d="M2 8L6 4L10 8M2 172L6 176L10 172" stroke="#555" stroke-width="1.4" fill="none"/></svg>
<div class="btn" style="left:1339px;top:916px;width:123px;height:20px;line-height:18px;color:#222">Neue Geräte suchen</div>
<div class="a" style="left:1230px;top:945px;width:161px;height:20px;background:#e0e0e0;border:1px solid #c8c8c8"></div>
<div class="t" style="left:1080px;top:949px;color:#222">Bluetooth</div>
<div class="t" style="left:1240px;top:949px;color:#222">M-Bus</div>

<!-- right map -->
<svg class="a" style="left:1146px;top:179px" width="329" height="476" viewBox="0 0 329 476">
<rect width="329" height="476" fill="#efece6"/>
<g fill="none" stroke="#e8b090" stroke-width="1.1">
<path d="M126 1 L129 50 L134 99 L156 133 L171 172"/>
<path d="M-0 138 L58 141 L107 148 L141 163 L171 172 L210 158 L234 148 L269 148"/>
<path d="M234 148 L269 114 L308 79 L329 69"/>
<path d="M175 6 L200 35 L205 55 L210 72"/>
<path d="M229 172 L239 207 L229 246 L205 280 L195 300"/>
<path d="M278 207 L303 216 L329 221"/>
<path d="M14 177 L33 197 L53 231 L77 261 L107 295 L121 324"/>
<path d="M-0 221 L43 231 L92 221 L141 197 L171 187 L190 167"/>
<path d="M171 172 L173 202 L180 216"/>
<path d="M72 35 L92 11 L102 1"/>
<path d="M288 11 L308 30 L329 40"/>
<path d="M126 324 L141 349 L166 373 L200 378"/>
<path d="M-0 422 L43 413 L92 408 L121 422"/>
</g>
<g fill="none" stroke="#d8a0b0" stroke-width="1.2"><path d="M126 1 L129 50 L134 99 L156 133 L171 172 L210 158 L234 148"/><path d="M-0 138 L58 141 L107 148 L141 163 L171 172"/></g>
<g fill="none" stroke="#cdb4d8" stroke-width="1.2" stroke-dasharray="2,2">
<path d="M-0 1 L23 16 L43 25 L68 20 L92 35 L112 45 L131 40 L166 30 L190 50 L215 55 L239 45 L269 35 L288 60 L313 65 L329 50"/>
<path d="M68 65 L63 89 L72 114 L92 123 L121 118 L141 114 L161 109 L185 114"/>
<path d="M-0 177 L23 172 L53 167 L72 187 L92 202 L117 197 L131 177 L156 172"/>
<path d="M112 45 L121 74 L141 99 L151 114"/>
<path d="M166 30 L180 55 L190 89 L185 114 L200 128"/>
<path d="M269 35 L259 65 L249 89 L269 114 L288 128 L313 138 L329 153"/>
<path d="M92 202 L102 221 L126 236 L151 246 L190 241 L219 246 L239 266 L259 285 L273 305"/>
<path d="M-0 266 L33 280 L63 295 L92 315 L121 310 L141 295 L166 285"/>
<path d="M269 148 L264 177 L259 197 L269 226 L288 246 L308 246 L329 256"/>
<path d="M23 30 L14 65 L4 89 L-0 118"/>
<path d="M53 89 L43 114 L38 138"/>
</g>
<g fill="none" stroke="#b898c8" stroke-width="1.6">
<path d="M0 261 L10 263 L23 266 L26 276 L34 294 L47 299 L49 281 L60 279 L75 286 L83 289 L86 299 L99 307 L117 312 L127 317 L135 320 L160 322 L190 330 L230 318 L260 300 L300 295 L329 290"/>
<path d="M122 320 L120 338 L114 356 L117 377 L130 403 L125 424 L128 445"/><path d="M0 463 L16 460 L31 465 L52 463 L68 468 L91 465 L109 458 L140 462 L180 470"/><path d="M300 340 L310 370 L305 400 L320 430 L329 440"/>
<path d="M300 420L310 440L329 445"/>
</g>
<g fill="none" stroke="#e0a090" stroke-width="1"><path d="M47 328 L62 335 L78 330 L94 333 L120 340M52 356 L73 356 L90 345M60 300 L70 320 L62 335M135 320 L150 340 L170 350 L200 345M0 450 L20 445 L40 455 L70 450M260 380 L280 400 L300 420M240 460 L270 440 L300 450"/></g>
<g font-family="Liberation Sans" fill="#333" font-size="9">
<text x="195" y="36">Olsztyn</text>
<text x="112" y="58">Grudziądz</text>
<text x="92" y="84" fill="#9070a8" font-style="italic">województwo</text>
<text x="78" y="94" fill="#9070a8" font-style="italic">kujawsko-pomorskie</text>
<text x="306" y="86" font-size="13">Biał</text>
<text x="0" y="114">lski</text>
<text x="28" y="140" font-size="12">Poznań</text>
<text x="165" y="129">Płock</text>
<text x="210" y="138" fill="#9070a8" font-style="italic">województwo</text>
<text x="213" y="148" fill="#9070a8" font-style="italic">mazowieckie</text>
<text x="278" y="156">Siedlce</text>
<text x="98" y="153">Konin</text>
<text x="90" y="187">Kalisz</text>
<text x="150" y="189" font-size="12">Łódź</text>
<text x="157" y="209">Piotrków</text>
<text x="151" y="219">Trybunalski</text>
<text x="227" y="211">Radom</text>
<text x="293" y="222">Lublin</text>
<text x="30" y="236" font-size="12">Wrocław</text>
<text x="0" y="259">Wałbrzych</text>
<text x="65" y="263" fill="#9070a8" font-style="italic">województwo</text>
<text x="75" y="273" fill="#9070a8" font-style="italic">opolskie</text>
<text x="224" y="251">Kielce</text>
<text x="114" y="285" fill="#9070a8" font-style="italic">województwo</text>
<text x="128" y="295" fill="#9070a8" font-style="italic">śląskie</text>
<text x="-2" y="293" fill="#9070a8" font-style="italic">ychod</text>
<text x="95" y="326">Ostrava</text>
<text x="40" y="346" fill="#9070a8" font-style="italic">Střední Morava</text>
<text x="121" y="369">Žilina</text>
<text x="72" y="474">Győr</text>
</g>
<rect x="134" y="297" width="174" height="157" fill="#fff" opacity="0.82"/>
<rect x="0" y="361" width="113" height="93" fill="#fff" opacity="0.82"/>
<rect x="0" y="428" width="30" height="11" fill="#a8a8f0"/>
<rect x="30" y="428" width="67" height="11" fill="#a8d0a8"/>
<line x1="30.5" y1="414" x2="30.5" y2="428" stroke="#555"/>
<g font-family="Liberation Sans" fill="#222" font-size="11"><text x="35" y="422">3200</text></g>
<g font-family="Liberation Sans" fill="#222" font-size="11">
<text x="149" y="325" font-size="12">Hydrantenzustand</text>
<text x="192" y="358">Ohne Mängel</text>
<text x="192" y="377">Geringe Mängel</text>
<text x="192" y="396">Gravierende Mängel</text>
<text x="192" y="415">Funktionsunfähig</text>
<text x="192" y="435">Kein Ergebnis</text>
</g>
<g stroke="#333" stroke-width="1">
<rect x="152.5" y="348.5" width="31" height="11" fill="#0a7a10"/>
<rect x="152.5" y="367.5" width="31" height="11" fill="#ffff00"/>
<rect x="152.5" y="386.5" width="31" height="11" fill="#ff9a00"/>
<rect x="152.5" y="405.5" width="31" height="11" fill="#ff0000"/>
<rect x="152.5" y="424.5" width="31" height="11" fill="#0000ee"/>
</g>
<g font-family="Liberation Sans" font-size="14"><text x="108" y="471" fill="#1a5fb4" text-decoration="underline">© OpenStreetMap</text><text x="225" y="471" fill="#111">and contributors</text></g>
</svg>

<div class="a" style="left:1474px;top:179px;width:1px;height:477px;background:#a8a8a8"></div>
<div class="a" style="left:10px;top:179px;width:1px;height:477px;background:#a8a8a8"></div>
<div class="a" style="left:10px;top:655px;width:1465px;height:1px;background:#a8a8a8"></div>
<!-- behind dialog -->
<div class="a" style="left:339px;top:122px;width:807px;height:756px;background:#f0f0f0;border:1px solid #a0a0a0"></div>
<svg class="a" style="left:349px;top:129px" width="15" height="15" viewBox="0 0 15 15"><g fill="#8a9a80"><rect x="1" y="3" width="5" height="2"/><rect x="1" y="7" width="5" height="2"/><rect x="1" y="11" width="5" height="2"/></g><use href="#hyd" x="6" y="0" width="8" height="15"/></svg>
<div class="t" style="left:367px;top:128px;font-size:14px;line-height:17px;color:#a0a0a0">Hy</div>
<svg class="a" style="left:1116px;top:132px" width="11" height="11"><path d="M0.5 0.5L10.5 10.5M10.5 0.5L0.5 10.5" stroke="#888" stroke-width="1"/></svg>
<div class="t" style="left:351px;top:165px;color:#333">Katalog</div>
<div class="combo" style="left:352px;top:181px;width:781px;height:20px"><div class="v" style="color:#333">Numm</div><div class="b"></div></div>
<div class="a" style="left:352px;top:223px;width:781px;height:571px;border:1px solid #a8a8a8;background:#f0f0f0"></div>
<div class="a" style="left:363px;top:235px;width:6px;height:6px;background:#777"></div>
<div class="a" style="left:353px;top:776px;width:779px;height:17px;background:#e8e8e8"></div>
<div class="t" style="left:358px;top:778px;color:#bbb;font-size:13px">&#8249;</div>
<div class="t" style="left:1119px;top:778px;color:#bbb;font-size:13px">&#8250;</div>
<div class="btn" style="left:356px;top:839px;width:40px;height:22px;border-color:#d4d4d4"></div>
<svg class="a" style="left:359px;top:842px" width="16" height="16"><rect x="1" y="1" width="11" height="14" fill="#ddd" stroke="#999"/><path d="M4 5H9M4 8H9" stroke="#888"/><path d="M8 8L14 14M14 8L8 14" stroke="#777" stroke-width="2"/></svg>
<div class="btn" style="left:1098px;top:839px;width:31px;height:22px"></div>
<div class="t" style="left:1097px;top:844px;color:#333">ßen</div>

<!-- main dialog -->
<div class="a" style="left:385px;top:76px;width:714px;height:847px;background:#f0f0f0;border:1px solid #999"></div>
<svg class="a" style="left:395px;top:82px" width="14" height="18" viewBox="0 0 14 18"><path d="M0.5 0.5H10L13.5 4V17.5H0.5Z" fill="#f8f8f8" stroke="#999"/><g stroke="#c43" stroke-width="1" fill="none"><path d="M2 4L3 5L5 3M2 8L3 9L5 7M2 12L3 13L5 11"/></g><g stroke="#222" stroke-width="1.2"><path d="M6 4.5H11M6 8.5H11M6 12.5H11"/></g></svg>
<div class="t" style="left:414px;top:84px;font-size:14px;line-height:17px;color:#999">Hydranteninspektion (W400-3-B1)</div>
<div class="t" style="left:1022px;top:84px;font-size:13px;color:#c0c0c0">?</div>
<svg class="a" style="left:1070px;top:86px" width="11" height="11"><path d="M0.5 0.5L10.5 10.5M10.5 0.5L0.5 10.5" stroke="#888" stroke-width="1"/></svg>
<div class="a" style="left:1087px;top:116px;width:1px;height:806px;background:#bdbdbd"></div>

<div class="t" style="left:413px;top:124px">Installierte Hydranten</div>
<div class="combo" style="left:413px;top:139px;width:668px;height:20px"><div class="v" style="color:#333;letter-spacing:-0.1px">Nummer: <span style="color:#1c1c80">123</span> --- Standort: <span style="color:#1c1c80">Hinter Hammer Tapetenmarkt</span> --- Hersteller: <span style="color:#1c1c80">VAG</span> --- Bezeichnug: <span style="color:#1c1c80">Hydrus G1</span></div><div class="b"></div></div>
<div class="t" style="left:413px;top:172px">Auftraggeber</div>
<div class="t" style="left:751px;top:172px">Durchführendes Unternehmen</div>
<div class="combo" style="left:413px;top:187px;width:326px;height:20px"><div class="v" style="color:#1c1c80">Stadtwerke Arnsberg --- Niedereimerfeld &nbsp;22 --- Arnsberg</div><div class="b"></div></div>
<div class="combo" style="left:751px;top:187px;width:330px;height:20px"><div class="v" style="color:#1c1c80">Sotronix --- Stockumer Str. 28 --- Witten</div><div class="b"></div></div>

<div class="t" style="left:413px;top:220px">Prüfungsdatum</div>
<div class="t" style="left:752px;top:220px">Verantwortlicher Prüfer</div>
<div class="combo" style="left:413px;top:235px;width:327px;height:20px"><div class="v" style="color:#333">Mittwoch, 29. Mai 2019</div><div class="b"></div></div>
<div class="combo" style="left:752px;top:235px;width:329px;height:20px"><div class="v" style="color:#1c1c80">Holger Braunschweig</div><div class="b"></div></div>

<div class="a" style="left:406px;top:261px;width:681px;height:1px;background:#c8c8c8"></div>

<div class="t u" style="left:412px;top:277px;font-size:10.5px">Hydrant</div>
<div class="t" style="left:412px;top:303px">Position des Hydrantenkörpers</div>
<div class="combo" style="left:572px;top:299px;width:145px;height:20px"><div class="v" style="color:#333">Zu lang</div><div class="b"></div></div>

<div class="cb" style="left:412px;top:332px"></div><div class="t" style="left:428px;top:333px">Entwässerung fehlerhaft</div>
<div class="cb" style="left:412px;top:359px"></div><div class="t" style="left:428px;top:360px">Undicht</div>
<div class="cb" style="left:412px;top:386px"></div><div class="t" style="left:428px;top:387px">Schwergängig</div>
<svg class="a" style="left:413px;top:387px" width="11" height="11"><path d="M2 6L4.5 8.5L9.5 2" stroke="#444" stroke-width="1.3" fill="none"/></svg>
<div class="cb" style="left:412px;top:413px"></div><div class="t" style="left:428px;top:414px">Stopfbuchse beschädigt</div>
<div class="cb" style="left:412px;top:440px"></div><div class="t" style="left:428px;top:441px">Vierkantschoner defekt / fehlt</div>
<div class="cb" style="left:412px;top:467px"></div><div class="t" style="left:428px;top:468px">Mängel an der Spindel</div>
<div class="cb" style="left:412px;top:494px"></div><div class="t" style="left:428px;top:495px">Ersatzschieber vorhanden</div>
<div class="t" style="left:412px;top:524px">Grad der Mängel</div>
<div class="combo" style="left:572px;top:520px;width:145px;height:20px"><div class="v" style="color:#333">Gravierende Mängel</div><div class="b"></div></div>

<div class="t u" style="left:777px;top:277px;font-size:10.5px">Hydrantenkappe</div>
<div class="t" style="left:778px;top:303px">Zustand der Kappe</div>
<div class="combo" style="left:938px;top:299px;width:143px;height:20px"><div class="v" style="color:#333">Nicht auffindbar</div><div class="b"></div></div>

<div class="t" style="left:778px;top:335px">Zustand des Kappendeckels</div>
<div class="combo" style="left:938px;top:331px;width:143px;height:20px"><div class="v" style="color:#333">Beschädigt</div><div class="b"></div></div>

<div class="t u" style="left:777px;top:361px;font-size:10.5px">Hydrantenklaue</div>
<div class="t" style="left:778px;top:387px">Zustand der Klaue</div>
<div class="combo" style="left:938px;top:383px;width:143px;height:20px"><div class="v" style="color:#333">Nicht vorhanden</div><div class="b"></div></div>

<div class="t" style="left:778px;top:419px">Zustand des Deckels</div>
<div class="combo" style="left:938px;top:415px;width:143px;height:20px"><div class="v" style="color:#333">Beschädigt</div><div class="b"></div></div>

<div class="t u" style="left:777px;top:445px;font-size:10.5px">Beschilderung</div>
<div class="t" style="left:778px;top:471px">Zustand</div>
<div class="combo" style="left:938px;top:467px;width:143px;height:20px"><div class="v" style="color:#333">In Ordnung</div><div class="b"></div></div>

<div class="t u" style="left:777px;top:497px;font-size:10.5px">Oberflächenbefestigung</div>
<div class="t" style="left:778px;top:523px">Beschaffenheit</div>
<div class="combo" style="left:938px;top:519px;width:143px;height:20px"><div class="v" style="color:#333">Unbefestigt</div><div class="b"></div></div>

<div class="t" style="left:413px;top:580px">Äußerer Zustand des Hydranten</div>
<div class="a" style="left:413px;top:595px;width:668px;height:52px;background:#fff;border:1px solid #ababab"></div>
<div class="a" style="left:1064px;top:596px;width:16px;height:50px;background:#f0f0f0"></div>
<svg class="a" style="left:1066px;top:598px" width="12" height="46"><path d="M2 7L6 3L10 7M2 38L6 42L10 38" stroke="#c4c4c4" stroke-width="1.2" fill="none"/></svg>
<div class="t" style="left:413px;top:660px">Bemerkungen</div>
<div class="a" style="left:413px;top:675px;width:463px;height:184px;background:#fff;border:1px solid #ababab"></div>
<div class="a" style="left:859px;top:676px;width:16px;height:182px;background:#f0f0f0"></div>
<svg class="a" style="left:861px;top:678px" width="12" height="178"><path d="M2 7L6 3L10 7M2 170L6 174L10 170" stroke="#c4c4c4" stroke-width="1.2" fill="none"/></svg>
<div class="t" style="left:888px;top:660px">Foto</div>
<div class="a" style="left:888px;top:675px;width:193px;height:157px;background:#fff;border:1px solid #ababab"></div>
<svg class="a" style="left:890px;top:677px" width="190" height="153" viewBox="0 0 190 153"><rect width="190" height="153" fill="#1c281c"/><path d="M0 64 L190 62 L190 118 L0 122Z" fill="#aaa7a2"/><path d="M115 92 L190 88 L190 118 L108 120Z" fill="#b8b5b0"/><path d="M0 116 L190 110 L190 153 L0 153Z" fill="#857568"/><circle cx="86" cy="135" r="0.9" fill="#b0a090"/><circle cx="162" cy="121" r="0.9" fill="#4e4238"/><circle cx="117" cy="120" r="0.7" fill="#b0a090"/><circle cx="17" cy="145" r="1.0" fill="#5e5046"/><circle cx="75" cy="131" r="1.0" fill="#4e4238"/><circle cx="118" cy="146" r="0.5" fill="#5e5046"/><circle cx="36" cy="123" r="1.1" fill="#5e5046"/><circle cx="62" cy="137" r="0.9" fill="#a08e7e"/><circle cx="122" cy="133" r="0.9" fill="#5e5046"/><circle cx="53" cy="153" r="1.1" fill="#5e5046"/><circle cx="60" cy="122" r="0.5" fill="#6a5a4e"/><circle cx="107" cy="117" r="1.2" fill="#5e5046"/><circle cx="73" cy="151" r="0.7" fill="#5e5046"/><circle cx="176" cy="115" r="1.3" fill="#b0a090"/><circle cx="76" cy="116" r="1.1" fill="#a08e7e"/><circle cx="51" cy="116" r="0.5" fill="#6a5a4e"/><circle cx="78" cy="150" r="0.7" fill="#a08e7e"/><circle cx="19" cy="115" r="0.6" fill="#b0a090"/><circle cx="106" cy="131" r="1.3" fill="#a08e7e"/><circle cx="146" cy="130" r="0.6" fill="#b0a090"/><circle cx="80" cy="122" r="1.2" fill="#6a5a4e"/><circle cx="185" cy="137" r="0.7" fill="#5e5046"/><circle cx="75" cy="147" r="0.6" fill="#4e4238"/><circle cx="188" cy="122" r="0.5" fill="#6a5a4e"/><circle cx="116" cy="146" r="0.6" fill="#b0a090"/><circle cx="17" cy="136" r="0.5" fill="#a08e7e"/><circle cx="70" cy="138" r="1.3" fill="#a08e7e"/><circle cx="92" cy="136" r="0.6" fill="#b0a090"/><circle cx="29" cy="149" r="0.7" fill="#4e4238"/><circle cx="36" cy="143" r="0.7" fill="#4e4238"/><circle cx="181" cy="148" r="0.6" fill="#4e4238"/><circle cx="9" cy="117" r="1.3" fill="#4e4238"/><circle cx="45" cy="141" r="0.8" fill="#6a5a4e"/><circle cx="172" cy="133" r="0.6" fill="#4e4238"/><circle cx="137" cy="116" r="0.9" fill="#a08e7e"/><circle cx="124" cy="138" r="0.7" fill="#5e5046"/><circle cx="174" cy="121" r="0.6" fill="#5e5046"/><circle cx="78" cy="123" r="0.6" fill="#5e5046"/><circle cx="70" cy="136" r="0.6" fill="#a08e7e"/><circle cx="26" cy="131" r="1.0" fill="#6a5a4e"/><circle cx="131" cy="136" r="1.0" fill="#a08e7e"/><circle cx="175" cy="132" r="1.1" fill="#6a5a4e"/><circle cx="183" cy="114" r="0.9" fill="#5e5046"/><circle cx="139" cy="126" r="0.6" fill="#5e5046"/><circle cx="104" cy="142" r="1.1" fill="#a08e7e"/><circle cx="174" cy="127" r="1.2" fill="#b0a090"/><circle cx="166" cy="130" r="1.2" fill="#5e5046"/><circle cx="109" cy="138" r="0.8" fill="#b0a090"/><circle cx="2" cy="116" r="1.0" fill="#5e5046"/><circle cx="189" cy="148" r="0.8" fill="#6a5a4e"/><circle cx="140" cy="136" r="0.9" fill="#b0a090"/><circle cx="103" cy="134" r="0.5" fill="#4e4238"/><circle cx="114" cy="132" r="1.3" fill="#a08e7e"/><circle cx="21" cy="144" r="0.7" fill="#b0a090"/><circle cx="2" cy="125" r="0.7" fill="#4e4238"/><circle cx="32" cy="149" r="0.9" fill="#b0a090"/><circle cx="46" cy="129" r="0.7" fill="#6a5a4e"/><circle cx="82" cy="145" r="1.2" fill="#a08e7e"/><circle cx="73" cy="136" r="0.7" fill="#6a5a4e"/><circle cx="26" cy="127" r="1.1" fill="#5e5046"/><circle cx="181" cy="124" r="0.6" fill="#a08e7e"/><circle cx="90" cy="150" r="0.8" fill="#b0a090"/><circle cx="99" cy="140" r="0.9" fill="#4e4238"/><circle cx="14" cy="114" r="0.5" fill="#4e4238"/><circle cx="135" cy="136" r="1.0" fill="#6a5a4e"/><circle cx="107" cy="139" r="0.9" fill="#b0a090"/><circle cx="5" cy="146" r="1.1" fill="#a08e7e"/><circle cx="151" cy="152" r="0.9" fill="#5e5046"/><circle cx="120" cy="139" r="1.3" fill="#6a5a4e"/><circle cx="130" cy="121" r="0.7" fill="#b0a090"/><circle cx="136" cy="143" r="1.1" fill="#4e4238"/><circle cx="34" cy="124" r="0.9" fill="#6a5a4e"/><circle cx="180" cy="133" r="0.8" fill="#a08e7e"/><circle cx="150" cy="149" r="0.8" fill="#5e5046"/><circle cx="170" cy="129" r="0.9" fill="#b0a090"/><circle cx="119" cy="149" r="0.9" fill="#b0a090"/><circle cx="124" cy="133" r="0.9" fill="#6a5a4e"/><circle cx="124" cy="121" r="0.7" fill="#5e5046"/><circle cx="171" cy="152" r="0.9" fill="#6a5a4e"/><circle cx="150" cy="126" r="0.8" fill="#5e5046"/><circle cx="16" cy="131" r="0.8" fill="#4e4238"/><circle cx="52" cy="150" r="1.1" fill="#a08e7e"/><circle cx="12" cy="145" r="0.9" fill="#a08e7e"/><circle cx="130" cy="150" r="0.6" fill="#b0a090"/><circle cx="98" cy="142" r="1.3" fill="#b0a090"/><circle cx="94" cy="151" r="1.1" fill="#5e5046"/><circle cx="83" cy="135" r="1.0" fill="#4e4238"/><circle cx="99" cy="147" r="0.7" fill="#4e4238"/><circle cx="128" cy="151" r="0.7" fill="#4e4238"/><circle cx="162" cy="152" r="0.7" fill="#4e4238"/><circle cx="95" cy="129" r="0.9" fill="#5e5046"/><circle cx="115" cy="114" r="0.9" fill="#5e5046"/><circle cx="76" cy="145" r="0.6" fill="#4e4238"/><circle cx="18" cy="120" r="0.9" fill="#4e4238"/><circle cx="175" cy="145" r="0.7" fill="#b0a090"/><circle cx="90" cy="118" r="1.2" fill="#b0a090"/><circle cx="178" cy="150" r="0.8" fill="#4e4238"/><circle cx="36" cy="138" r="0.6" fill="#6a5a4e"/><circle cx="148" cy="114" r="0.6" fill="#a08e7e"/><circle cx="2" cy="124" r="0.7" fill="#6a5a4e"/><circle cx="95" cy="133" r="0.6" fill="#4e4238"/><circle cx="97" cy="123" r="1.1" fill="#a08e7e"/><circle cx="167" cy="114" r="1.2" fill="#b0a090"/><circle cx="117" cy="135" r="1.0" fill="#4e4238"/><circle cx="101" cy="147" r="1.0" fill="#4e4238"/><circle cx="26" cy="150" r="1.2" fill="#6a5a4e"/><circle cx="60" cy="126" r="0.7" fill="#a08e7e"/><circle cx="190" cy="149" r="1.2" fill="#a08e7e"/><circle cx="25" cy="117" r="0.6" fill="#b0a090"/><circle cx="158" cy="130" r="0.7" fill="#a08e7e"/><circle cx="119" cy="145" r="0.7" fill="#5e5046"/><circle cx="130" cy="149" r="0.6" fill="#6a5a4e"/><circle cx="96" cy="143" r="1.3" fill="#4e4238"/><circle cx="158" cy="145" r="0.6" fill="#b0a090"/><circle cx="7" cy="135" r="1.2" fill="#4e4238"/><circle cx="91" cy="121" r="0.7" fill="#5e5046"/><circle cx="160" cy="153" r="1.0" fill="#5e5046"/><circle cx="26" cy="140" r="1.1" fill="#5e5046"/><circle cx="62" cy="132" r="0.8" fill="#4e4238"/><circle cx="40" cy="128" r="1.2" fill="#5e5046"/><circle cx="34" cy="131" r="0.8" fill="#6a5a4e"/><circle cx="37" cy="120" r="1.1" fill="#4e4238"/><circle cx="62" cy="116" r="1.0" fill="#b0a090"/><circle cx="36" cy="136" r="1.1" fill="#6a5a4e"/><circle cx="49" cy="149" r="1.2" fill="#a08e7e"/><circle cx="77" cy="149" r="1.1" fill="#4e4238"/><circle cx="146" cy="144" r="0.7" fill="#b0a090"/><circle cx="35" cy="145" r="0.9" fill="#6a5a4e"/><circle cx="2" cy="127" r="0.5" fill="#4e4238"/><circle cx="52" cy="151" r="0.8" fill="#6a5a4e"/><circle cx="125" cy="136" r="0.6" fill="#4e4238"/><circle cx="98" cy="133" r="1.1" fill="#a08e7e"/><circle cx="145" cy="152" r="0.6" fill="#5e5046"/><circle cx="21" cy="122" r="0.8" fill="#b0a090"/><circle cx="10" cy="121" r="0.5" fill="#b0a090"/><circle cx="49" cy="124" r="0.9" fill="#6a5a4e"/><circle cx="96" cy="152" r="1.2" fill="#4e4238"/><circle cx="19" cy="131" r="0.9" fill="#5e5046"/><circle cx="127" cy="151" r="1.2" fill="#b0a090"/><circle cx="30" cy="132" r="1.2" fill="#a08e7e"/><circle cx="103" cy="137" r="1.3" fill="#b0a090"/><circle cx="80" cy="134" r="0.7" fill="#4e4238"/><circle cx="101" cy="132" r="0.9" fill="#6a5a4e"/><circle cx="54" cy="142" r="0.5" fill="#6a5a4e"/><circle cx="147" cy="136" r="0.8" fill="#a08e7e"/><circle cx="130" cy="115" r="1.1" fill="#6a5a4e"/><circle cx="10" cy="153" r="0.6" fill="#6a5a4e"/><circle cx="172" cy="130" r="0.7" fill="#b0a090"/><circle cx="144" cy="115" r="1.2" fill="#5e5046"/><circle cx="137" cy="132" r="1.0" fill="#a08e7e"/><circle cx="22" cy="138" r="0.6" fill="#b0a090"/><circle cx="164" cy="127" r="0.6" fill="#a08e7e"/><circle cx="84" cy="140" r="1.0" fill="#b0a090"/><circle cx="122" cy="140" r="1.1" fill="#6a5a4e"/><circle cx="101" cy="153" r="1.1" fill="#6a5a4e"/><circle cx="45" cy="118" r="1.1" fill="#6a5a4e"/><circle cx="119" cy="127" r="1.0" fill="#6a5a4e"/><circle cx="138" cy="141" r="1.0" fill="#a08e7e"/><circle cx="143" cy="121" r="0.9" fill="#a08e7e"/><circle cx="124" cy="121" r="1.0" fill="#5e5046"/><path d="M0 30L30 22L58 40L62 70L50 90L70 110L88 135L70 150L0 150Z" fill="#587a50" opacity="0.85"/><ellipse cx="2" cy="16" rx="5.5" ry="2.3" fill="#243424"/><ellipse cx="103" cy="4" rx="6.7" ry="2.5" fill="#243424"/><ellipse cx="45" cy="61" rx="4.9" ry="2.6" fill="#36503a"/><ellipse cx="65" cy="46" rx="6.2" ry="3.3" fill="#243424"/><ellipse cx="156" cy="52" rx="4.8" ry="4.2" fill="#2e422c"/><ellipse cx="74" cy="9" rx="5.6" ry="5.0" fill="#2e422c"/><ellipse cx="62" cy="34" rx="4.7" ry="3.1" fill="#2e422c"/><ellipse cx="18" cy="54" rx="5.2" ry="3.3" fill="#243424"/><ellipse cx="108" cy="51" rx="4.2" ry="4.3" fill="#36503a"/><ellipse cx="14" cy="13" rx="3.3" ry="2.9" fill="#203020"/><ellipse cx="138" cy="43" rx="6.5" ry="2.7" fill="#142014"/><ellipse cx="125" cy="20" rx="4.3" ry="3.3" fill="#243424"/><ellipse cx="113" cy="56" rx="4.8" ry="4.4" fill="#142014"/><ellipse cx="58" cy="20" rx="6.9" ry="4.2" fill="#36503a"/><ellipse cx="98" cy="5" rx="3.1" ry="4.0" fill="#142014"/><ellipse cx="111" cy="49" rx="4.5" ry="3.2" fill="#203020"/><ellipse cx="29" cy="37" rx="3.7" ry="4.3" fill="#2e422c"/><ellipse cx="167" cy="17" rx="3.9" ry="2.2" fill="#243424"/><ellipse cx="30" cy="18" rx="5.6" ry="4.4" fill="#243424"/><ellipse cx="12" cy="34" rx="3.3" ry="2.2" fill="#203020"/><ellipse cx="140" cy="56" rx="3.1" ry="4.0" fill="#243424"/><ellipse cx="19" cy="51" rx="4.0" ry="2.7" fill="#36503a"/><ellipse cx="145" cy="32" rx="4.6" ry="3.0" fill="#36503a"/><ellipse cx="184" cy="42" rx="5.0" ry="4.4" fill="#36503a"/><ellipse cx="14" cy="38" rx="4.6" ry="4.5" fill="#243424"/><ellipse cx="127" cy="53" rx="6.3" ry="4.7" fill="#36503a"/><ellipse cx="182" cy="40" rx="4.4" ry="2.0" fill="#203020"/><ellipse cx="21" cy="57" rx="4.0" ry="2.5" fill="#2e422c"/><ellipse cx="121" cy="42" rx="3.8" ry="3.3" fill="#142014"/><ellipse cx="55" cy="60" rx="4.9" ry="4.2" fill="#243424"/><ellipse cx="58" cy="10" rx="6.6" ry="4.3" fill="#2e422c"/><ellipse cx="3" cy="30" rx="4.3" ry="2.6" fill="#243424"/><ellipse cx="68" cy="36" rx="5.9" ry="3.8" fill="#203020"/><ellipse cx="43" cy="11" rx="4.6" ry="4.7" fill="#142014"/><ellipse cx="178" cy="39" rx="4.9" ry="2.8" fill="#203020"/><ellipse cx="169" cy="57" rx="5.6" ry="4.3" fill="#142014"/><ellipse cx="18" cy="53" rx="3.2" ry="4.8" fill="#36503a"/><ellipse cx="152" cy="24" rx="6.2" ry="4.3" fill="#203020"/><ellipse cx="150" cy="4" rx="6.6" ry="4.6" fill="#2e422c"/><ellipse cx="172" cy="28" rx="5.9" ry="3.8" fill="#2e422c"/><ellipse cx="30" cy="10" rx="3.6" ry="4.7" fill="#142014"/><ellipse cx="154" cy="8" rx="4.1" ry="3.6" fill="#203020"/><ellipse cx="29" cy="48" rx="3.8" ry="4.7" fill="#243424"/><ellipse cx="28" cy="8" rx="4.1" ry="4.1" fill="#142014"/><ellipse cx="18" cy="30" rx="3.3" ry="4.2" fill="#36503a"/><ellipse cx="103" cy="31" rx="6.2" ry="3.3" fill="#243424"/><ellipse cx="174" cy="6" rx="3.8" ry="3.6" fill="#36503a"/><ellipse cx="100" cy="10" rx="4.3" ry="3.2" fill="#142014"/><ellipse cx="106" cy="62" rx="4.4" ry="4.1" fill="#243424"/><ellipse cx="20" cy="24" rx="6.0" ry="4.4" fill="#36503a"/><ellipse cx="23" cy="28" rx="5.8" ry="3.4" fill="#36503a"/><ellipse cx="56" cy="7" rx="6.4" ry="4.5" fill="#243424"/><ellipse cx="137" cy="56" rx="4.2" ry="3.1" fill="#2e422c"/><ellipse cx="103" cy="18" rx="6.0" ry="3.7" fill="#142014"/><ellipse cx="17" cy="12" rx="5.9" ry="3.0" fill="#36503a"/><ellipse cx="180" cy="35" rx="4.8" ry="3.1" fill="#142014"/><ellipse cx="19" cy="39" rx="5.7" ry="4.1" fill="#2e422c"/><ellipse cx="34" cy="25" rx="5.4" ry="2.3" fill="#36503a"/><ellipse cx="43" cy="10" rx="4.7" ry="4.3" fill="#243424"/><ellipse cx="65" cy="51" rx="3.6" ry="2.6" fill="#203020"/><ellipse cx="28" cy="43" rx="4.3" ry="3.2" fill="#36503a"/><ellipse cx="3" cy="25" rx="6.9" ry="4.4" fill="#142014"/><ellipse cx="125" cy="38" rx="4.0" ry="2.6" fill="#243424"/><ellipse cx="58" cy="27" rx="4.5" ry="3.5" fill="#203020"/><ellipse cx="150" cy="51" rx="5.9" ry="2.8" fill="#203020"/><ellipse cx="102" cy="19" rx="4.4" ry="3.5" fill="#2e422c"/><ellipse cx="27" cy="44" rx="7.0" ry="4.1" fill="#203020"/><ellipse cx="178" cy="35" rx="5.5" ry="2.6" fill="#243424"/><ellipse cx="16" cy="15" rx="4.7" ry="3.0" fill="#203020"/><ellipse cx="17" cy="54" rx="4.9" ry="2.4" fill="#142014"/><ellipse cx="187" cy="42" rx="3.4" ry="1.9" fill="#3e5e3a"/><ellipse cx="179" cy="64" rx="3.5" ry="1.7" fill="#34503a"/><ellipse cx="169" cy="46" rx="2.6" ry="2.4" fill="#34503a"/><ellipse cx="170" cy="43" rx="3.1" ry="2.1" fill="#3e5e3a"/><ellipse cx="164" cy="62" rx="2.8" ry="2.5" fill="#4a6e44"/><ellipse cx="159" cy="48" rx="2.4" ry="2.1" fill="#3e5e3a"/><ellipse cx="74" cy="52" rx="3.4" ry="1.8" fill="#3e5e3a"/><ellipse cx="132" cy="45" rx="2.1" ry="2.7" fill="#34503a"/><ellipse cx="157" cy="58" rx="4.4" ry="2.4" fill="#567a50"/><ellipse cx="126" cy="49" rx="3.9" ry="2.2" fill="#567a50"/><ellipse cx="189" cy="60" rx="4.1" ry="1.7" fill="#567a50"/><ellipse cx="84" cy="62" rx="3.3" ry="2.1" fill="#34503a"/><ellipse cx="179" cy="46" rx="2.7" ry="2.4" fill="#3e5e3a"/><ellipse cx="122" cy="48" rx="3.9" ry="2.0" fill="#34503a"/><ellipse cx="141" cy="40" rx="4.1" ry="1.9" fill="#3e5e3a"/><ellipse cx="175" cy="63" rx="3.7" ry="2.3" fill="#567a50"/><ellipse cx="99" cy="46" rx="4.4" ry="2.8" fill="#567a50"/><ellipse cx="190" cy="57" rx="4.2" ry="2.1" fill="#34503a"/><ellipse cx="167" cy="44" rx="3.4" ry="2.9" fill="#567a50"/><ellipse cx="82" cy="59" rx="4.2" ry="2.4" fill="#3e5e3a"/><ellipse cx="124" cy="46" rx="2.1" ry="1.8" fill="#34503a"/><ellipse cx="123" cy="50" rx="2.4" ry="2.5" fill="#567a50"/><ellipse cx="98" cy="46" rx="4.2" ry="2.0" fill="#567a50"/><ellipse cx="130" cy="62" rx="4.2" ry="1.8" fill="#567a50"/><ellipse cx="173" cy="56" rx="2.5" ry="2.8" fill="#3e5e3a"/><ellipse cx="112" cy="50" rx="3.6" ry="2.5" fill="#4a6e44"/><ellipse cx="137" cy="52" rx="2.5" ry="2.8" fill="#4a6e44"/><ellipse cx="76" cy="41" rx="4.4" ry="1.9" fill="#34503a"/><ellipse cx="120" cy="61" rx="3.7" ry="2.9" fill="#34503a"/><ellipse cx="123" cy="40" rx="4.2" ry="1.7" fill="#4a6e44"/><ellipse cx="153" cy="45" rx="3.3" ry="1.9" fill="#4a6e44"/><ellipse cx="103" cy="59" rx="3.5" ry="1.8" fill="#3e5e3a"/><ellipse cx="106" cy="62" rx="2.7" ry="2.5" fill="#4a6e44"/><ellipse cx="81" cy="64" rx="4.3" ry="1.6" fill="#567a50"/><ellipse cx="179" cy="38" rx="3.3" ry="2.1" fill="#34503a"/><ellipse cx="138" cy="42" rx="2.6" ry="1.9" fill="#4a6e44"/><ellipse cx="136" cy="43" rx="4.5" ry="1.6" fill="#4a6e44"/><ellipse cx="125" cy="58" rx="2.0" ry="2.8" fill="#567a50"/><ellipse cx="77" cy="40" rx="2.8" ry="2.2" fill="#34503a"/><ellipse cx="74" cy="46" rx="3.5" ry="2.7" fill="#4a6e44"/><ellipse cx="83" cy="49" rx="3.4" ry="1.9" fill="#567a50"/><ellipse cx="156" cy="57" rx="3.2" ry="1.8" fill="#34503a"/><ellipse cx="140" cy="51" rx="2.5" ry="3.0" fill="#3e5e3a"/><ellipse cx="76" cy="50" rx="2.8" ry="2.4" fill="#4a6e44"/><ellipse cx="143" cy="59" rx="3.8" ry="2.8" fill="#567a50"/><ellipse cx="74" cy="41" rx="3.4" ry="2.3" fill="#4a6e44"/><ellipse cx="165" cy="44" rx="2.1" ry="2.1" fill="#4a6e44"/><ellipse cx="153" cy="59" rx="3.9" ry="2.2" fill="#34503a"/><ellipse cx="148" cy="51" rx="2.6" ry="1.7" fill="#567a50"/><ellipse cx="153" cy="60" rx="2.2" ry="2.1" fill="#567a50"/><ellipse cx="26" cy="52" rx="2.4" ry="3.0" fill="#4a7444"/><ellipse cx="42" cy="42" rx="3.6" ry="3.0" fill="#527e4a"/><ellipse cx="3" cy="55" rx="2.5" ry="2.3" fill="#2e4a2c"/><ellipse cx="21" cy="78" rx="5.4" ry="2.9" fill="#4a7444"/><ellipse cx="50" cy="147" rx="2.8" ry="2.0" fill="#2e4a2c"/><ellipse cx="39" cy="55" rx="2.3" ry="2.0" fill="#6e9c62"/><ellipse cx="22" cy="143" rx="2.8" ry="1.8" fill="#2e4a2c"/><ellipse cx="41" cy="149" rx="3.2" ry="2.9" fill="#527e4a"/><ellipse cx="61" cy="99" rx="3.6" ry="2.3" fill="#5e8c54"/><ellipse cx="59" cy="73" rx="2.8" ry="2.2" fill="#4a7444"/><ellipse cx="13" cy="94" rx="3.7" ry="2.3" fill="#5e8c54"/><ellipse cx="42" cy="120" rx="3.6" ry="3.5" fill="#6e9c62"/><ellipse cx="48" cy="133" rx="3.9" ry="2.3" fill="#5e8c54"/><ellipse cx="3" cy="60" rx="4.2" ry="2.5" fill="#38603a"/><ellipse cx="52" cy="89" rx="5.2" ry="2.9" fill="#2e4a2c"/><ellipse cx="19" cy="70" rx="4.5" ry="3.1" fill="#5e8c54"/><ellipse cx="10" cy="55" rx="2.1" ry="2.1" fill="#4a7444"/><ellipse cx="27" cy="35" rx="3.1" ry="3.0" fill="#6e9c62"/><ellipse cx="36" cy="32" rx="4.1" ry="2.5" fill="#6e9c62"/><ellipse cx="13" cy="89" rx="2.1" ry="2.1" fill="#5e8c54"/><ellipse cx="30" cy="93" rx="3.8" ry="2.6" fill="#5e8c54"/><ellipse cx="22" cy="81" rx="2.5" ry="1.9" fill="#6e9c62"/><ellipse cx="20" cy="114" rx="2.5" ry="2.5" fill="#6e9c62"/><ellipse cx="25" cy="38" rx="3.2" ry="1.9" fill="#38603a"/><ellipse cx="3" cy="28" rx="3.7" ry="1.5" fill="#527e4a"/><ellipse cx="53" cy="118" rx="4.3" ry="3.3" fill="#527e4a"/><ellipse cx="15" cy="111" rx="2.4" ry="3.0" fill="#527e4a"/><ellipse cx="26" cy="123" rx="2.3" ry="2.4" fill="#38603a"/><ellipse cx="27" cy="33" rx="5.3" ry="2.1" fill="#6e9c62"/><ellipse cx="49" cy="53" rx="2.7" ry="3.0" fill="#6e9c62"/><ellipse cx="25" cy="114" rx="2.3" ry="2.2" fill="#2e4a2c"/><ellipse cx="30" cy="44" rx="2.9" ry="3.2" fill="#2e4a2c"/><ellipse cx="22" cy="139" rx="2.4" ry="3.3" fill="#6e9c62"/><ellipse cx="64" cy="59" rx="3.7" ry="2.7" fill="#6e9c62"/><ellipse cx="33" cy="66" rx="2.3" ry="1.6" fill="#38603a"/><ellipse cx="23" cy="72" rx="2.9" ry="2.8" fill="#38603a"/><ellipse cx="13" cy="84" rx="3.2" ry="3.3" fill="#2e4a2c"/><ellipse cx="2" cy="113" rx="4.7" ry="2.8" fill="#5e8c54"/><ellipse cx="43" cy="76" rx="2.2" ry="1.6" fill="#6e9c62"/><ellipse cx="32" cy="81" rx="2.1" ry="1.8" fill="#6e9c62"/><ellipse cx="35" cy="64" rx="3.7" ry="1.5" fill="#38603a"/><ellipse cx="42" cy="59" rx="4.4" ry="2.0" fill="#38603a"/><ellipse cx="0" cy="93" rx="2.0" ry="2.6" fill="#6e9c62"/><ellipse cx="59" cy="121" rx="4.2" ry="2.6" fill="#4a7444"/><ellipse cx="58" cy="146" rx="2.9" ry="1.7" fill="#38603a"/><ellipse cx="1" cy="126" rx="4.4" ry="2.9" fill="#5e8c54"/><ellipse cx="67" cy="128" rx="3.2" ry="2.9" fill="#5e8c54"/><ellipse cx="56" cy="62" rx="3.0" ry="3.0" fill="#6e9c62"/><ellipse cx="37" cy="55" rx="3.3" ry="2.9" fill="#5e8c54"/><ellipse cx="64" cy="117" rx="5.5" ry="3.1" fill="#4a7444"/><ellipse cx="62" cy="64" rx="3.8" ry="2.9" fill="#6e9c62"/><ellipse cx="3" cy="103" rx="5.0" ry="1.6" fill="#6e9c62"/><ellipse cx="18" cy="88" rx="3.4" ry="2.9" fill="#527e4a"/><ellipse cx="18" cy="114" rx="2.6" ry="3.2" fill="#38603a"/><ellipse cx="14" cy="95" rx="4.0" ry="2.3" fill="#5e8c54"/><ellipse cx="49" cy="103" rx="4.8" ry="1.8" fill="#38603a"/><ellipse cx="26" cy="109" rx="4.3" ry="3.4" fill="#5e8c54"/><ellipse cx="33" cy="112" rx="2.9" ry="2.0" fill="#5e8c54"/><ellipse cx="18" cy="108" rx="5.3" ry="3.5" fill="#6e9c62"/><ellipse cx="3" cy="114" rx="5.0" ry="1.9" fill="#4a7444"/><ellipse cx="25" cy="92" rx="3.4" ry="3.3" fill="#4a7444"/><ellipse cx="58" cy="132" rx="3.3" ry="2.1" fill="#5e8c54"/><ellipse cx="56" cy="130" rx="2.8" ry="2.9" fill="#38603a"/><ellipse cx="29" cy="43" rx="3.4" ry="2.9" fill="#2e4a2c"/><ellipse cx="38" cy="125" rx="3.5" ry="3.2" fill="#5e8c54"/><ellipse cx="39" cy="137" rx="3.5" ry="1.8" fill="#6e9c62"/><ellipse cx="62" cy="59" rx="2.5" ry="2.8" fill="#2e4a2c"/><ellipse cx="19" cy="53" rx="2.7" ry="2.6" fill="#6e9c62"/><ellipse cx="39" cy="44" rx="5.1" ry="2.1" fill="#4a7444"/><ellipse cx="5" cy="48" rx="2.5" ry="3.1" fill="#6e9c62"/><ellipse cx="69" cy="76" rx="3.5" ry="3.1" fill="#4a7444"/><ellipse cx="28" cy="32" rx="4.2" ry="3.2" fill="#2e4a2c"/><ellipse cx="18" cy="49" rx="5.0" ry="3.5" fill="#38603a"/><ellipse cx="31" cy="129" rx="2.2" ry="3.2" fill="#527e4a"/><ellipse cx="66" cy="92" rx="2.3" ry="2.2" fill="#527e4a"/><ellipse cx="53" cy="64" rx="3.6" ry="3.3" fill="#2e4a2c"/><ellipse cx="4" cy="71" rx="2.9" ry="2.0" fill="#2e4a2c"/><ellipse cx="65" cy="87" rx="4.8" ry="3.2" fill="#38603a"/><ellipse cx="54" cy="148" rx="5.3" ry="2.5" fill="#4a7444"/><ellipse cx="59" cy="76" rx="2.1" ry="2.7" fill="#2e4a2c"/><ellipse cx="16" cy="74" rx="3.8" ry="2.1" fill="#38603a"/><ellipse cx="69" cy="103" rx="3.2" ry="2.1" fill="#6e9c62"/><ellipse cx="63" cy="65" rx="2.9" ry="1.9" fill="#4a7444"/><ellipse cx="13" cy="31" rx="3.9" ry="2.9" fill="#5e8c54"/><ellipse cx="12" cy="38" rx="3.3" ry="1.9" fill="#5e8c54"/><ellipse cx="2" cy="75" rx="3.4" ry="2.1" fill="#4a7444"/><ellipse cx="38" cy="144" rx="2.1" ry="1.8" fill="#5e8c54"/><ellipse cx="5" cy="99" rx="5.5" ry="2.4" fill="#2e4a2c"/><ellipse cx="67" cy="52" rx="4.7" ry="3.3" fill="#6e9c62"/><ellipse cx="57" cy="34" rx="5.3" ry="2.1" fill="#6e9c62"/><ellipse cx="13" cy="70" rx="2.5" ry="2.8" fill="#4a7444"/><ellipse cx="26" cy="105" rx="4.2" ry="2.2" fill="#5e8c54"/><ellipse cx="31" cy="114" rx="3.8" ry="2.6" fill="#6e9c62"/><ellipse cx="8" cy="130" rx="4.6" ry="2.4" fill="#527e4a"/><ellipse cx="33" cy="130" rx="2.8" ry="2.7" fill="#2e4a2c"/><ellipse cx="40" cy="89" rx="3.8" ry="2.4" fill="#4a7444"/><ellipse cx="20" cy="31" rx="5.3" ry="1.8" fill="#4a7444"/><ellipse cx="33" cy="149" rx="4.2" ry="1.9" fill="#527e4a"/><ellipse cx="33" cy="94" rx="5.0" ry="1.8" fill="#4a7444"/><ellipse cx="69" cy="86" rx="2.7" ry="3.3" fill="#5e8c54"/><ellipse cx="55" cy="43" rx="4.8" ry="2.5" fill="#4a7444"/><ellipse cx="70" cy="33" rx="4.5" ry="2.0" fill="#4a7444"/><ellipse cx="57" cy="82" rx="2.1" ry="2.4" fill="#2e4a2c"/><ellipse cx="34" cy="145" rx="2.3" ry="2.6" fill="#5e8c54"/><ellipse cx="55" cy="86" rx="2.3" ry="2.5" fill="#5e8c54"/><ellipse cx="4" cy="134" rx="4.8" ry="1.8" fill="#4a7444"/><ellipse cx="26" cy="38" rx="5.3" ry="3.4" fill="#4a7444"/><ellipse cx="15" cy="61" rx="2.6" ry="2.3" fill="#6e9c62"/><ellipse cx="59" cy="102" rx="2.3" ry="3.5" fill="#6e9c62"/><ellipse cx="14" cy="104" rx="5.4" ry="2.6" fill="#527e4a"/><ellipse cx="92" cy="110" rx="3.7" ry="2.8" fill="#3e6a3a"/><ellipse cx="89" cy="121" rx="3.7" ry="1.8" fill="#6e9a60"/><ellipse cx="51" cy="123" rx="2.1" ry="1.9" fill="#7aa06a"/><ellipse cx="57" cy="109" rx="2.8" ry="1.5" fill="#3e6a3a"/><ellipse cx="48" cy="103" rx="4.2" ry="2.7" fill="#3e6a3a"/><ellipse cx="54" cy="98" rx="3.1" ry="2.7" fill="#3e6a3a"/><ellipse cx="64" cy="113" rx="4.4" ry="2.0" fill="#5a8a50"/><ellipse cx="78" cy="104" rx="2.7" ry="2.8" fill="#5a8a50"/><ellipse cx="58" cy="129" rx="2.6" ry="2.2" fill="#7aa06a"/><ellipse cx="54" cy="112" rx="3.1" ry="1.6" fill="#6e9a60"/><ellipse cx="65" cy="106" rx="3.6" ry="1.9" fill="#7aa06a"/><ellipse cx="76" cy="96" rx="2.0" ry="2.1" fill="#6e9a60"/><ellipse cx="73" cy="130" rx="3.1" ry="2.0" fill="#7aa06a"/><ellipse cx="84" cy="129" rx="3.4" ry="1.6" fill="#5a8a50"/><ellipse cx="87" cy="99" rx="2.0" ry="1.5" fill="#3e6a3a"/><ellipse cx="73" cy="123" rx="3.7" ry="1.7" fill="#5a8a50"/><ellipse cx="48" cy="102" rx="3.2" ry="2.5" fill="#3e6a3a"/><ellipse cx="48" cy="104" rx="4.5" ry="2.1" fill="#5a8a50"/><ellipse cx="84" cy="121" rx="4.5" ry="1.6" fill="#5a8a50"/><ellipse cx="67" cy="111" rx="3.3" ry="2.4" fill="#6e9a60"/><ellipse cx="68" cy="128" rx="2.2" ry="2.7" fill="#7aa06a"/><ellipse cx="45" cy="133" rx="3.7" ry="3.0" fill="#3e6a3a"/><ellipse cx="67" cy="130" rx="3.2" ry="1.5" fill="#7aa06a"/><ellipse cx="85" cy="133" rx="2.3" ry="2.1" fill="#5a8a50"/><ellipse cx="71" cy="134" rx="2.8" ry="2.3" fill="#5a8a50"/><ellipse cx="51" cy="118" rx="3.7" ry="2.3" fill="#6e9a60"/><ellipse cx="59" cy="109" rx="2.6" ry="2.1" fill="#6e9a60"/><ellipse cx="48" cy="104" rx="2.4" ry="1.7" fill="#7aa06a"/><ellipse cx="51" cy="131" rx="2.4" ry="2.3" fill="#6e9a60"/><ellipse cx="53" cy="120" rx="3.0" ry="1.5" fill="#5a8a50"/><ellipse cx="52" cy="128" rx="2.4" ry="2.3" fill="#7aa06a"/><ellipse cx="46" cy="99" rx="4.3" ry="2.3" fill="#3e6a3a"/><ellipse cx="81" cy="126" rx="3.0" ry="1.6" fill="#7aa06a"/><ellipse cx="57" cy="99" rx="2.8" ry="2.2" fill="#7aa06a"/><ellipse cx="76" cy="130" rx="3.4" ry="2.3" fill="#6e9a60"/><ellipse cx="87" cy="111" rx="2.7" ry="2.4" fill="#3e6a3a"/><ellipse cx="55" cy="98" rx="3.0" ry="2.5" fill="#7aa06a"/><ellipse cx="61" cy="100" rx="4.1" ry="1.6" fill="#3e6a3a"/><ellipse cx="70" cy="117" rx="4.0" ry="2.5" fill="#7aa06a"/><ellipse cx="79" cy="96" rx="3.2" ry="1.8" fill="#3e6a3a"/><ellipse cx="154" cy="91" rx="2.7" ry="2.4" fill="#4e7a48"/><ellipse cx="125" cy="95" rx="3.9" ry="2.0" fill="#3a6036"/><ellipse cx="147" cy="88" rx="2.4" ry="2.6" fill="#3a6036"/><ellipse cx="123" cy="84" rx="3.0" ry="2.6" fill="#4e7a48"/><ellipse cx="122" cy="82" rx="3.2" ry="2.7" fill="#3a6036"/><ellipse cx="162" cy="94" rx="2.8" ry="1.9" fill="#3a6036"/><ellipse cx="151" cy="82" rx="3.7" ry="2.0" fill="#6a9a5e"/><ellipse cx="134" cy="98" rx="3.3" ry="1.6" fill="#3a6036"/><ellipse cx="154" cy="81" rx="3.1" ry="2.9" fill="#4e7a48"/><ellipse cx="149" cy="80" rx="3.2" ry="1.5" fill="#6a9a5e"/><ellipse cx="153" cy="89" rx="2.3" ry="1.6" fill="#4e7a48"/><ellipse cx="151" cy="83" rx="3.4" ry="2.7" fill="#8a9a58"/><ellipse cx="140" cy="100" rx="3.7" ry="2.9" fill="#4e7a48"/><ellipse cx="136" cy="98" rx="3.4" ry="2.1" fill="#4e7a48"/><ellipse cx="151" cy="94" rx="3.8" ry="1.8" fill="#4e7a48"/><ellipse cx="139" cy="92" rx="2.3" ry="1.9" fill="#4e7a48"/><ellipse cx="138" cy="100" rx="2.4" ry="2.6" fill="#8a9a58"/><ellipse cx="142" cy="90" rx="3.0" ry="2.2" fill="#8a9a58"/><ellipse cx="145" cy="99" rx="2.4" ry="2.0" fill="#3a6036"/><ellipse cx="127" cy="88" rx="2.9" ry="2.4" fill="#8a9a58"/><ellipse cx="141" cy="97" rx="3.0" ry="3.0" fill="#6a9a5e"/><ellipse cx="135" cy="95" rx="3.3" ry="2.0" fill="#6a9a5e"/><ellipse cx="138" cy="81" rx="3.6" ry="1.9" fill="#4e7a48"/><ellipse cx="131" cy="85" rx="3.1" ry="3.0" fill="#4e7a48"/><ellipse cx="161" cy="90" rx="2.2" ry="1.8" fill="#8a9a58"/><ellipse cx="148" cy="95" rx="2.1" ry="2.5" fill="#6a9a5e"/><ellipse cx="146" cy="92" rx="3.0" ry="2.2" fill="#3a6036"/><ellipse cx="164" cy="88" rx="2.2" ry="2.7" fill="#3a6036"/><ellipse cx="130" cy="84" rx="2.2" ry="2.6" fill="#3a6036"/><ellipse cx="146" cy="100" rx="3.4" ry="2.0" fill="#3a6036"/><ellipse cx="189" cy="80" rx="3.2" ry="2.7" fill="#7aa06a"/><ellipse cx="190" cy="61" rx="2.0" ry="2.3" fill="#7aa06a"/><ellipse cx="171" cy="67" rx="3.1" ry="1.9" fill="#7aa06a"/><ellipse cx="167" cy="59" rx="3.9" ry="1.7" fill="#7aa06a"/><ellipse cx="175" cy="83" rx="3.7" ry="2.4" fill="#3e6a3a"/><ellipse cx="179" cy="80" rx="3.5" ry="2.6" fill="#3e6a3a"/><ellipse cx="180" cy="77" rx="2.1" ry="2.9" fill="#7aa06a"/><ellipse cx="174" cy="82" rx="3.0" ry="2.5" fill="#5a8a50"/><ellipse cx="174" cy="64" rx="3.0" ry="2.3" fill="#3e6a3a"/><ellipse cx="174" cy="65" rx="2.2" ry="2.9" fill="#3e6a3a"/><ellipse cx="181" cy="60" rx="2.2" ry="2.3" fill="#5a8a50"/><ellipse cx="168" cy="88" rx="2.7" ry="1.7" fill="#7aa06a"/><ellipse cx="189" cy="78" rx="2.1" ry="2.4" fill="#5a8a50"/><ellipse cx="190" cy="79" rx="3.1" ry="2.2" fill="#3e6a3a"/><ellipse cx="182" cy="61" rx="2.7" ry="2.2" fill="#3e6a3a"/><ellipse cx="170" cy="79" rx="2.3" ry="1.8" fill="#7aa06a"/><ellipse cx="182" cy="59" rx="2.2" ry="2.8" fill="#3e6a3a"/><ellipse cx="171" cy="65" rx="3.9" ry="3.0" fill="#7aa06a"/><ellipse cx="189" cy="86" rx="3.9" ry="1.5" fill="#7aa06a"/><ellipse cx="177" cy="76" rx="3.1" ry="2.8" fill="#3e6a3a"/><path d="M44 6L50 4L54 10L58 15L52 14L47 11Z" fill="#f0f0f0"/><g>
<rect x="89" y="24" width="18" height="10" rx="1" fill="#c84a48"/>
<path d="M75 37 Q75 33 99 33 Q123 33 123 37 L123 52 Q123 56 99 56 Q75 56 75 52Z" fill="#d85450"/>
<path d="M75 42 L123 42" stroke="#b03a38" stroke-width="0.8"/>
<path d="M76 50 L122 50" stroke="#b03a38" stroke-width="0.8"/>
<rect x="85.5" y="55" width="29.5" height="88" fill="#e05a56"/>
<rect x="85.5" y="55" width="5" height="88" fill="#c84440"/>
<rect x="108" y="55" width="7" height="88" fill="#d04c48"/>
<ellipse cx="99" cy="143" rx="15" ry="2.5" fill="#c04440"/>
<path d="M64 63 Q64 58 72 58 L88 59 L88 75 L72 76 Q64 76 64 70Z" fill="#d85450"/>
<path d="M112 59 L128 58 Q137 58 137 64 L137 70 Q137 76 128 76 L112 75Z" fill="#d85450"/>
<path d="M70 60L76 74M74 59L80 74M122 59L128 74M126 59L132 74" stroke="#a83432" stroke-width="0.8"/>
<path d="M79 116 L86 114 L86 126 L80 125 Q77 121 79 116Z" fill="#d04c48"/>
<g stroke="#a03430" stroke-width="0.6"><path d="M93 62H107M93 67H107M94 72H106M94 77H106M93 82H107"/></g>
</g></svg>
<div class="btn" style="left:884px;top:840px;width:201px;height:22px">Bild laden</div>

<div class="btn" style="left:560px;top:884px;width:94px;height:22px;text-align:left;padding-left:31px">Speichern</div>
<div class="btn" style="left:666px;top:884px;width:169px;height:22px;text-align:left;padding-left:35px">Speichern und schließen</div>
<div class="btn" style="left:847px;top:884px;width:124px;height:22px;text-align:left;padding-left:33px;color:#a8a8a8;border-color:#d0d0d0">Bericht drucken</div>
<div class="btn" style="left:983px;top:884px;width:99px;height:22px;text-align:left;padding-left:31px">Abbrechen</div><svg class="a" style="left:563px;top:887px" width="17" height="17" viewBox="0 0 17 17"><path d="M0 1Q0 0 1 0H14L16 2V16Q16 17 15 17H1Q0 17 0 16Z" fill="#4a4a50"/><rect x="4" y="1" width="8" height="5" fill="#9a9aa0"/><rect x="9" y="2" width="2" height="3" fill="#444"/><g fill="#e8d0d0"><rect x="2" y="10" width="6" height="1.2"/><rect x="2" y="12.5" width="6" height="1.2"/><rect x="2" y="15" width="6" height="1.2"/></g><path d="M8 12L11 15L16 9" stroke="#38a8e0" stroke-width="2.2" fill="none"/></svg><svg class="a" style="left:669px;top:887px" width="17" height="17" viewBox="0 0 17 17"><path d="M0 1Q0 0 1 0H14L16 2V16Q16 17 15 17H1Q0 17 0 16Z" fill="#4a4a50"/><rect x="4" y="1" width="8" height="5" fill="#9a9aa0"/><rect x="9" y="2" width="2" height="3" fill="#444"/><g fill="#e8d0d0"><rect x="2" y="10" width="6" height="1.2"/><rect x="2" y="12.5" width="6" height="1.2"/><rect x="2" y="15" width="6" height="1.2"/></g><path d="M8 12L11 15L16 9" stroke="#38a8e0" stroke-width="2.2" fill="none"/></svg>
<svg class="a" style="left:850px;top:887px" width="17" height="17" viewBox="0 0 17 17"><rect x="4" y="1" width="8" height="7" fill="#c8c8c8" stroke="#b0b0b0"/><rect x="1" y="8" width="15" height="6" rx="1" fill="#a8a8a8"/><rect x="3" y="13" width="11" height="3" fill="#d0d0d0"/></svg>
<svg class="a" style="left:985px;top:886px" width="18" height="18" viewBox="0 0 18 18"><path d="M2 4L4 2L9 7L14 2L16 4L11 9L16 14L14 16L9 11L4 16L2 14L7 9Z" fill="#d83838" stroke="#a02020" stroke-width="1" stroke-linejoin="round"/></svg>


</body></html>
